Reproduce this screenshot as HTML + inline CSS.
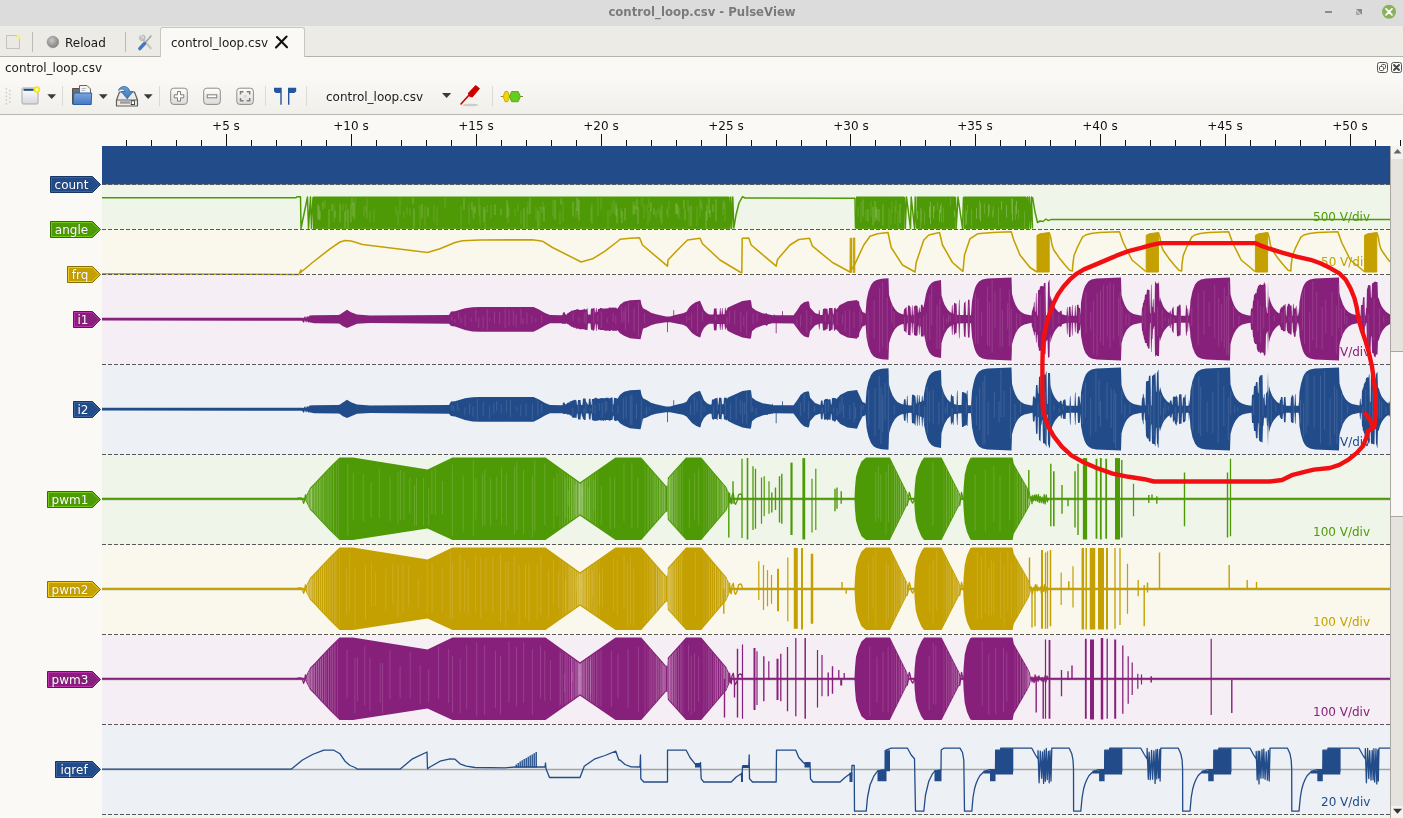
<!DOCTYPE html>
<html><head><meta charset="utf-8"><title>control_loop.csv - PulseView</title>
<style>
html,body{margin:0;padding:0;}
body{width:1404px;height:818px;overflow:hidden;background:#fbf9f6;font-family:"DejaVu Sans","Liberation Sans",sans-serif;font-size:12px;color:#1a1a1a;position:relative;}
.abs{position:absolute;}
#title{left:0;top:0;width:1404px;height:26px;background:#dcdcdc;}
#title .t{will-change:transform;position:absolute;left:0;width:1404px;top:5px;text-align:center;font-weight:bold;font-size:11.7px;color:#7a7a7a;letter-spacing:0px;}
#tabrow{left:0;top:26px;width:1404px;height:30px;background:#edebe6;border-bottom:1px solid #b4b2ad;}
#tab{left:160px;top:27px;width:145px;height:30px;background:#fbf9f6;border:1px solid #c9c6c0;border-bottom:none;border-radius:3px 3px 0 0;box-sizing:border-box;}
.txt{position:absolute;white-space:nowrap;line-height:14px;will-change:transform;}
#toolbar{left:0;top:78px;width:1404px;height:36px;background:linear-gradient(#fbf9f6,#f1efea);border-bottom:1px solid #bab8b3;}
.sep{position:absolute;width:1px;background:#dcdad5;}
.lbl{will-change:transform;position:absolute;color:#fff;font-size:12px;line-height:16px;text-shadow:0 0 1px rgba(0,0,0,.35);white-space:nowrap;}
.tick{will-change:transform;position:absolute;font-size:12px;line-height:14px;white-space:nowrap;color:#111;}
.div{will-change:transform;position:absolute;font-size:12px;line-height:14px;white-space:nowrap;}
svg{position:absolute;left:0;top:0;}
</style></head><body>
<div id="title" class="abs"><div class="t">control_loop.csv - PulseView</div></div>
<div id="tabrow" class="abs"></div>
<div id="tab" class="abs"></div>
<div class="txt" style="left:65px;top:36px;">Reload</div>
<div class="txt" style="left:171px;top:36px;">control_loop.csv</div>
<div class="txt" style="left:5px;top:61px;">control_loop.csv</div>
<div id="toolbar" class="abs"></div>
<div class="txt" style="left:326px;top:90px;">control_loop.csv</div>
<div class="sep" style="left:32px;top:32px;height:20px;background:#bdbbb6;"></div>
<div class="sep" style="left:125px;top:32px;height:20px;background:#bdbbb6;"></div>
<div class="sep" style="left:62px;top:86px;height:20px;"></div>
<div class="sep" style="left:159px;top:86px;height:20px;"></div>
<div class="sep" style="left:265px;top:86px;height:20px;"></div>
<div class="sep" style="left:306px;top:86px;height:20px;"></div>
<div class="sep" style="left:492px;top:86px;height:20px;"></div>
<div class="tick" style="left:226.2px;top:119px;width:60px;margin-left:-30px;text-align:center;">+5 s</div>
<div class="tick" style="left:351.1px;top:119px;width:60px;margin-left:-30px;text-align:center;">+10 s</div>
<div class="tick" style="left:475.9px;top:119px;width:60px;margin-left:-30px;text-align:center;">+15 s</div>
<div class="tick" style="left:600.8px;top:119px;width:60px;margin-left:-30px;text-align:center;">+20 s</div>
<div class="tick" style="left:725.6px;top:119px;width:60px;margin-left:-30px;text-align:center;">+25 s</div>
<div class="tick" style="left:850.5px;top:119px;width:60px;margin-left:-30px;text-align:center;">+30 s</div>
<div class="tick" style="left:975.3px;top:119px;width:60px;margin-left:-30px;text-align:center;">+35 s</div>
<div class="tick" style="left:1100.2px;top:119px;width:60px;margin-left:-30px;text-align:center;">+40 s</div>
<div class="tick" style="left:1225.0px;top:119px;width:60px;margin-left:-30px;text-align:center;">+45 s</div>
<div class="tick" style="left:1349.9px;top:119px;width:60px;margin-left:-30px;text-align:center;">+50 s</div>
<div class="abs" style="left:1390px;top:146px;width:14px;height:672px;background:#e6e3df;border-left:1px solid #a9a7a2;box-sizing:border-box;"></div>
<div class="abs" style="left:1391px;top:146px;width:13px;height:13px;background:#f5f3f0;"></div>
<div class="abs" style="left:1391px;top:806px;width:13px;height:12px;background:#f5f3f0;"></div>
<div class="abs" style="left:1391px;top:351px;width:13px;height:166px;background:#faf8f6;border-top:1px solid #a9a7a2;border-bottom:1px solid #a9a7a2;box-sizing:border-box;"></div>
<div class="abs" style="left:1403px;top:26px;width:1px;height:792px;background:#d3d5cb;"></div>
<svg width="1404" height="818" viewBox="0 0 1404 818">
<rect x="102" y="185" width="1288" height="45" fill="#f0f5ea"/>
<rect x="102" y="230" width="1288" height="45" fill="#faf8ec"/>
<rect x="102" y="275" width="1288" height="90" fill="#f5eef4"/>
<rect x="102" y="365" width="1288" height="90" fill="#edf0f5"/>
<rect x="102" y="455" width="1288" height="90" fill="#f0f5ea"/>
<rect x="102" y="545" width="1288" height="90" fill="#faf8ec"/>
<rect x="102" y="635" width="1288" height="90" fill="#f5eef4"/>
<rect x="102" y="725" width="1288" height="90" fill="#edf0f5"/>
<rect x="102" y="815" width="1288" height="3" fill="#f0f5ea"/>
</svg>
<div class="div" style="right:34px;top:210px;color:#4e9a06;">500 V/div</div>
<div class="div" style="right:34px;top:255px;color:#c4a000;">50 V/div</div>
<div class="div" style="right:34px;top:345px;color:#87207a;">V/div</div>
<div class="div" style="right:34px;top:435px;color:#224b89;">V/div</div>
<div class="div" style="right:34px;top:525px;color:#4e9a06;">100 V/div</div>
<div class="div" style="right:34px;top:615px;color:#c4a000;">100 V/div</div>
<div class="div" style="right:34px;top:705px;color:#87207a;">100 V/div</div>
<div class="div" style="right:34px;top:795px;color:#224b89;">20 V/div</div>
<svg width="1404" height="818" viewBox="0 0 1404 818">
<path d="M126.5 140 V146 M151.5 140 V146 M176.5 140 V146 M201.5 140 V146 M226.5 134 V146 M251.5 140 V146 M276.5 140 V146 M301.5 140 V146 M326.5 140 V146 M351.5 134 V146 M376.5 140 V146 M401.5 140 V146 M426.5 140 V146 M451.5 140 V146 M476.5 134 V146 M501.5 140 V146 M526.5 140 V146 M551.5 140 V146 M576.5 140 V146 M601.5 134 V146 M626.5 140 V146 M651.5 140 V146 M676.5 140 V146 M701.5 140 V146 M726.5 134 V146 M751.5 140 V146 M776.5 140 V146 M801.5 140 V146 M826.5 140 V146 M850.5 134 V146 M875.5 140 V146 M900.5 140 V146 M925.5 140 V146 M950.5 140 V146 M975.5 134 V146 M1000.5 140 V146 M1025.5 140 V146 M1050.5 140 V146 M1075.5 140 V146 M1100.5 134 V146 M1125.5 140 V146 M1150.5 140 V146 M1175.5 140 V146 M1200.5 140 V146 M1225.5 134 V146 M1250.5 140 V146 M1275.5 140 V146 M1300.5 140 V146 M1325.5 140 V146 M1350.5 134 V146 M1375.5 140 V146 M1400.5 140 V146" stroke="#111" stroke-width="1" fill="none"/>
<rect x="102" y="146" width="1288" height="38.5" fill="#224b89"/>
<rect x="313" y="196.5" width="416" height="32.4" fill="#4e9a06"/>
<rect x="856" y="196.5" width="48.5" height="32.4" fill="#4e9a06"/>
<rect x="916.5" y="196.5" width="39" height="32.4" fill="#4e9a06"/>
<rect x="963.5" y="196.5" width="62.5" height="32.4" fill="#4e9a06"/>
<path d="M325 200.2 V207.5 M334 203.7 V222.2 M343 204.4 V211.1 M346 204.1 V221.2 M354 201.2 V219.5 M355 197.9 V219.2 M364 206.2 V216.9 M366 205.8 V212.9 M367 198.8 V218.8 M370 210.8 V223 M374 209.1 V221.9 M396 207 V215.3 M398 210.3 V225.7 M400 197.8 V215.3 M404 211.1 V218 M407 207.3 V214.6 M410 208 V216.4 M420 205.2 V227.1 M425 205.6 V226.6 M434 204.5 V223.1 M437 206.9 V226.2 M445 197.6 V208.4 M461 205.8 V227 M469 203.7 V224.3 M473 208.5 V217.3 M474 205.7 V219.9 M479 197.9 V215.5 M480 205 V225 M485 209.1 V227.8 M487 205.1 V212.5 M491 205.1 V218.3 M508 204.3 V222.8 M509 208.2 V216.1 M515 208.9 V215.7 M518 204.1 V211.5 M521 210.9 V224.4 M527 207.2 V227.9 M528 201.6 V214.6 M536 207.3 V220.3 M540 205.8 V226.3 M542 206.8 V213.3 M543 201.8 V209.6 M553 200.4 V216.4 M560 210.9 V224.1 M563 201.6 V222.2 M576 208.2 V217.7 M578 197.9 V214.9 M591 206.5 V221.4 M592 203 V224.1 M598 197.8 V215.5 M601 197.6 V209.9 M608 210.4 V227.4 M610 209.7 V216.6 M612 202.2 V212.6 M614 199.3 V214.1 M621 208.1 V217.5 M633 201.9 V215.5 M635 201.8 V209.3 M636 206.1 V214.3 M642 198.1 V205.8 M644 203.8 V219 M647 204.9 V211.4 M648 210.8 V225.6 M649 198.6 V207.2 M650 209.9 V220.7 M656 211.2 V218.4 M658 208.2 V214.2 M660 209.7 V218.3 M661 206.6 V222.7 M662 204.4 V224.9 M667 207.7 V215.3 M668 209.5 V218.2 M669 201.4 V209.5 M678 205.5 V216.6 M679 208.4 V219 M688 199.8 V211.6 M689 206.5 V225.9 M697 206.4 V225.8 M700 198.9 V216.9 M701 200.8 V207.6 M702 203.3 V210.6 M723 201.5 V214.7 M724 199.5 V209.1 M725 203.4 V221.7 M858 206.6 V217.4 M861 201.7 V222.2 M866 209.5 V220.9 M871 201 V216.7 M889 208.4 V227.9 M891 210.5 V224.2 M892 201.1 V213.1 M895 205.5 V223.7 M896 198.6 V212.7 M898 210.7 V227.2 M920.5 208 V227.9 M921.5 209.3 V222.6 M924.5 211.3 V224.6 M934.5 205.6 V212.1 M937.5 201.6 V209.5 M941.5 202.7 V222.7 M943.5 207.5 V222.2 M950.5 197.5 V205.9 M965.5 209.1 V225 M967.5 205.2 V212.9 M971.5 209.1 V226.4 M979.5 200.6 V218.9 M984.5 203.4 V213.8 M989.5 204.7 V213.2 M992.5 209.9 V217.6 M993.5 206.2 V216.4 M998.5 207.3 V225.4 M1011.5 198.5 V213.9 M1015.5 204.9 V219.8 M1018.5 209.1 V218.8 M1024.5 211.2 V227.9" stroke="#f0f5ea" stroke-width=".8" opacity=".2" fill="none"/>
<path d="M318 204.2 V219.1 M319 206.3 V220.3 M320 210.9 V219.7 M323 202 V209.4 M329 209.3 V227.9 M332 204 V211.2 M335 210.6 V217.5 M340 204.1 V221.9 M345 211.3 V227.9 M348 209.3 V227.9 M351 204.2 V222.4 M352 197.6 V205 M353 203 V216.6 M413 197.6 V204.1 M414 208.5 V227.4 M422 204.2 V218.9 M428 207.2 V216.6 M464 198.6 V209.9 M472 202.5 V210 M475 206.4 V213 M484 206.8 V222 M495 204.5 V215 M501 208.7 V215.4 M507 200.4 V218.3 M524 208.2 V227.9 M530 197.6 V214.1 M538 210.4 V227.9 M544 207 V221.5 M555 199.6 V219.6 M561 198.4 V204.4 M573 201.8 V216.3 M577 197.9 V210.7 M579 200.3 V220.5 M616 203.4 V216.1 M617 208.6 V223.4 M622 210.8 V223.2 M625 208.3 V220.5 M634 205.5 V214.2 M637 199.1 V209.1 M638 207.3 V223.8 M651 202.7 V211.5 M654 208.3 V214.8 M676 202.8 V213.7 M677 204.1 V213.8 M684 199.8 V208.7 M685 208.9 V220.2 M691 205.6 V226.4 M706 211 V227.9 M707 204.8 V220.5 M709 197.8 V213.3 M710 210 V217.3 M713 204.5 V212.2 M716 199.2 V221.1 M863 199.4 V216.6 M868 209.1 V221.5 M873 206.9 V225.6 M875 201 V221.6 M876 206.8 V217.5 M877 209.2 V219.9 M879 209 V221.4 M883 204.6 V225.8 M900 203.7 V223 M917.5 211 V219 M929.5 206.6 V217.7 M930.5 202 V223.9 M933.5 205.8 V218.8 M939.5 209.3 V221.3 M940.5 205.2 V213.2 M954.5 210.3 V216.8 M966.5 211.2 V224.5 M976.5 208.3 V218.7 M980.5 202.9 V221.4 M988.5 204.8 V216.6 M1001.5 201 V209.9 M1006.5 205.3 V217.5 M1012.5 198.8 V220.7 M1016.5 201.1 V213.8" stroke="#f0f5ea" stroke-width=".8" opacity=".34" fill="none"/>
<path d="M102 197.7 L296 197.7 L297 196.7 L300.5 196.7 L301 228.5 L307.5 197 L308.5 228.5 L310.5 197 L311.5 228.5 L313 197 M729 197 L729.8 228.4 L730.8 197 L731.6 228.4 L732.8 197 L733.8 228.4 M733.8 228.5 L736 215 L739 203 L742.5 196.7 L745 198 L855 198.3 L855.5 228.5 M904.5 197 L905.3 228.4 L906.5 197 L910.5 228.4 L911.2 197 L914.5 228.4 L915.2 197 L916.5 228.4 M955.5 197 L956.2 228.4 L958 197 L962.5 228.4 L963.5 197 M1026 197 L1026.8 228.4 L1027.6 197 L1028.4 228.4 L1029.4 197 L1030.4 228.4 L1031.5 197 L1032.5 228.4 M1032.5 197 L1035 212 L1037.5 222.5 L1040 221 L1043 221.5 L1046 219 L1048 220.5 L1051 219.6 L1390 219.6" stroke="#4e9a06" stroke-width="1.5" fill="none" stroke-linejoin="round"/>
<path d="M102 273.8 L298.8 274.5 L301 270 L300 273 L312.5 262.5 L330 248.8 L340 242 L345 240.5 L351.2 241 L362.5 244.5 L427.5 252.5 L440 248.8 L455 242.5 L462.5 240.8 L480 240 L532.5 239.8 L542.5 241.2 L552.5 247.5 L581.2 262 L592.5 258.8 L605 251.2 L618.8 240.5 L620 239.2 L630 238.2 L639.5 237.8 L642.5 245 L667.5 266.2 L668 260 L677.5 250 L687.5 240 L700 238.2 L702.5 243.8 L720 260 L740 272 L741.8 272.8 L742.2 238.2 L748.8 238 L751.2 245 L776.2 266.2 L777.5 259.5 L790 245 L798.8 239.5 L809.5 238.2 L812.5 246.2 L832.5 262.5 L850 272 L855 263.8 L863.8 245 L870 236.2 L877.5 233.8 L888 232.5 L891.2 247.5 L902.5 265 L915 272 L916.2 262.5 L923.8 240 L928.8 235 L939.5 232.5 L942.5 245 L952.5 262.5 L962.5 271.2 L963 271.2 L964.5 255 L970 238.8 L977.5 233.8 L992.5 232.5 L1011.2 231.8 L1013.8 240 L1020 255 L1030 267.5 L1037 272" stroke="#c4a000" stroke-width="1.55" fill="none" stroke-linejoin="round"/>
<path d="M850 272.5 L850.2 238.2 L851.5 238.2 L851.5 272.5Z" fill="#c4a000" stroke="#c4a000" stroke-width="1"/>
<path d="M853.2 272.5 L853.2 238 L854.8 238 L854.8 272.5Z" fill="#c4a000" stroke="#c4a000" stroke-width="1"/>
<path d="M1037 272 L1037 235.3 L1040 233.8 L1049.2 232.5 L1049.2 272Z" fill="#c4a000" stroke="#c4a000" stroke-width="1"/>
<path d="M1049.2 232.6 L1050.7 237.2 L1052 245.1 L1053.8 250 L1059.3 257.9 L1064.8 264.7 L1069.7 270.2 L1072.4 271 L1072.8 264.7 L1074 255.5 L1077 248.2 L1080 242 L1082.5 237.2 L1085.5 235 L1091 233.5 L1099.5 232.5 L1119.5 231.8 L1123.2 242.5 L1132 260 L1145.8 271.5" stroke="#c4a000" stroke-width="1.55" fill="none" stroke-linejoin="round"/>
<path d="M1146.2 272 L1146.2 235.3 L1149.2 233.8 L1158.4 232.5 L1158.4 272Z" fill="#c4a000" stroke="#c4a000" stroke-width="1"/>
<path d="M1158.4 232.6 L1159.9 237.2 L1161.2 245.1 L1163 250 L1168.5 257.9 L1174 264.7 L1178.9 270.2 L1181.6 271 L1182 264.7 L1183.2 255.5 L1186.2 248.2 L1189.2 242 L1191.7 237.2 L1194.7 235 L1200.2 233.5 L1208.7 232.5 L1228.7 231.8 L1232.5 242.5 L1241.2 260 L1255 271.5" stroke="#c4a000" stroke-width="1.55" fill="none" stroke-linejoin="round"/>
<path d="M1255.4 272 L1255.4 235.3 L1258.4 233.8 L1267.6 232.5 L1267.6 272Z" fill="#c4a000" stroke="#c4a000" stroke-width="1"/>
<path d="M1267.6 232.6 L1269.1 237.2 L1270.4 245.1 L1272.2 250 L1277.7 257.9 L1283.2 264.7 L1288.1 270.2 L1290.8 271 L1291.2 264.7 L1292.4 255.5 L1295.4 248.2 L1298.4 242 L1300.9 237.2 L1303.9 235 L1309.4 233.5 L1317.9 232.5 L1337.9 231.8 L1341.7 242.5 L1350.4 260 L1364.2 271.5" stroke="#c4a000" stroke-width="1.55" fill="none" stroke-linejoin="round"/>
<path d="M1364.6 272 L1364.6 235.3 L1367.6 233.8 L1376.8 232.5 L1376.8 272Z" fill="#c4a000" stroke="#c4a000" stroke-width="1"/>
<path d="M1376.8 232.6 L1378.3 237.2 L1379.6 245.1 L1381.4 250 L1386.9 257.9 L1390 261.7" stroke="#c4a000" stroke-width="1.55" fill="none" stroke-linejoin="round"/>
<path d="M102 317.8 L302 317.7 L303.5 318.1 L305 316.2 L306 318.2 L307 315.7 L308 316.9 L308.5 316.8 L309.5 315.5 L314 315.2 L338 315 L339.5 314.7 L347 309.8 L351 312.2 L357 314.6 L370 315.4 L449 314.9 L451 311.4 L455 311.2 L465 308.2 L472.5 307.2 L480 306.9 L533.5 306.9 L538.5 309.3 L545 312.9 L550 314.9 L561.5 315.2 L562.5 314.9 L563 312.4 L563.5 312.4 L564 311.9 L564.5 311.9 L565 313.8 L565.5 313.8 L566 315.1 L566.5 315.1 L567 313.4 L567.5 313.4 L568 312.9 L568.5 312.9 L569 312.2 L570.5 311.7 L571 310.8 L573.5 310.6 L574 309.9 L575.5 309.9 L576 309.4 L577 309.3 L578.5 309.3 L579 310 L582.5 309.8 L583.5 309.6 L584 308.7 L584.5 308.7 L585 309.4 L586.5 309.4 L587 308.2 L587.5 308.2 L588 314.8 L588.5 314.8 L589 314.2 L590.5 314.8 L591 308.8 L592 308.4 L593.5 308.5 L594 307.9 L594.5 307.9 L595 312.6 L595.5 312.6 L596 308.1 L596.5 308.1 L597 312.1 L597.5 312.1 L598 308.9 L599.5 308.9 L600 308 L601.5 308 L602 308.5 L605.5 308.5 L608.5 308.2 L609 307.6 L610.5 307.6 L611 307.9 L612 307.4 L615.5 307.7 L616 307.2 L616.5 308.2 L617.5 308.7 L620 304.7 L624 301.8 L630 300.2 L640 299.8 L640.5 299.8 L641.5 304.7 L643 308.2 L647 310.2 L651 312.7 L656 314.2 L666 316.5 L670 316.4 L676 314.7 L683 313.2 L686.5 311.8 L689 307.4 L691.5 304.9 L695.5 302.3 L700 300.8 L704 310.3 L707 313.3 L709.5 314.6 L713.5 314.6 L714 308.6 L715.5 308.6 L716.5 308.2 L717 314.5 L719.5 314.4 L720 307.9 L720.5 307.9 L721 314.3 L721.5 314.3 L722 308 L722.5 308 L723 314.3 L724.5 314.2 L725 307.6 L725.5 307.6 L726 311.3 L727.5 307.9 L728 307.5 L735 304.2 L742.5 300.9 L750 299.9 L751 300.4 L752 307.4 L756 310.5 L762.5 313.2 L765.5 313.8 L766 313.1 L766.5 313.1 L767 314.1 L772.5 315.2 L773.5 315.2 L774 314.4 L774.5 314.4 L775 315.2 L793.5 315.2 L797 310.4 L800.5 304.9 L804 302.2 L808 301.2 L809 301.7 L810 307.4 L815 312.9 L818.5 314.3 L819 309.9 L819.5 309.9 L820 314.9 L822.5 314.9 L823 309.1 L823.5 309.1 L824 308.5 L825.5 308.5 L826 308.8 L827.5 308.8 L828 314.7 L828.5 314.6 L829 308 L832.5 308.1 L833 314.5 L833.5 314.5 L834 308.3 L834.5 308.3 L835 307.7 L835.5 307.7 L836 309.5 L836.5 309.4 L837 308.4 L837.5 308.2 L838.5 306.9 L839 305.8 L840 304.9 L847.5 301.2 L857 299.9 L858 301.5 L858.5 301.5 L859 300.5 L859.5 304.9 L862.5 311.9 L865 312.9 L865.5 314.2 L866.5 300.9 L867 298 L868.5 291.3 L871 285 L873.5 281.8 L876.5 280 L881.5 278.8 L888.5 278.2 L889 294.6 L890.5 300.1 L892.5 305.2 L895 309.3 L897.5 311.9 L901 313.8 L903.5 314.5 L904 309.3 L904.5 309.3 L905 308.2 L905.5 308.2 L906 307 L906.5 307 L907 315.2 L907.5 315.2 L908 305.5 L909.5 305.5 L910 306.8 L910.5 306.8 L911 315.6 L911.5 315.6 L912 305.5 L912.5 305.5 L913 315.2 L913.5 314.9 L914 306.4 L914.5 306.4 L915 305.5 L916.5 305.5 L917 306 L917.5 306 L918 312.8 L918.5 312.6 L919 307.5 L919.5 307.5 L920 312 L920.5 311.9 L921 304.8 L922.5 304.8 L923 307.3 L923.5 307.3 L926 293.9 L927.5 289.2 L929 286.1 L931.5 283.1 L934.5 281.3 L941 279.9 L941.5 295.2 L943 300.5 L944.5 304.4 L947.5 309.6 L950 312 L951.5 312.9 L952 305.1 L952.5 305.1 L953 313.6 L953.5 313.9 L954 302.8 L954.5 302.8 L955 303.4 L956.5 303.4 L957 314.8 L958.5 315 L959 299.8 L959.5 299.8 L960 315 L963.5 315.1 L964 302.9 L964.5 302.9 L965 301.5 L965.5 301.5 L966 315.1 L967.5 315.1 L968 299.7 L969.5 299.7 L970 315.2 L971 315.2 L972 301.3 L973.5 293.4 L975 288.1 L976.5 284.7 L979 281.4 L982.5 279.4 L987.5 278.4 L1011.5 277.5 L1012 293.8 L1013.5 299.4 L1015.5 304.8 L1018 309.1 L1021 312.1 L1024.5 314 L1031.5 315.6 L1032 310.4 L1032.5 310.4 L1033 307.3 L1033.5 307.3 L1034 301.9 L1034.5 301.9 L1035 311.7 L1035.5 311.7 L1036 293 L1036.5 293 L1037 315.6 L1037.5 315.6 L1038 290.2 L1039.5 289.7 L1040 286.6 L1040.5 286.6 L1041 286 L1042.5 286 L1043 286.5 L1043.5 286.5 L1044 283.1 L1045.5 283.1 L1046 315.3 L1047.5 315.3 L1048 282.3 L1048.5 282.3 L1049 280.1 L1049.5 280.1 L1050 299.9 L1050.5 295.2 L1051.5 299.8 L1052.5 302.7 L1054 306 L1055.5 308.4 L1058 311.4 L1059.5 312.5 L1060 311.2 L1061.5 310.6 L1062 314.2 L1066.5 315.5 L1067 307.1 L1067.5 307.1 L1068 315.7 L1068.5 315.7 L1069 306.7 L1070.5 306.7 L1071 315.7 L1071.5 315.7 L1072 305.1 L1072.5 305.1 L1073 315.7 L1074.5 315.7 L1075 305.4 L1075.5 305.4 L1076 315.7 L1076.5 315.7 L1077 304.7 L1078.5 304.7 L1079 307.9 L1080 307.9 L1080.5 315.2 L1081 302.6 L1082.5 294.2 L1084 288.7 L1085.5 285.2 L1088.5 281.2 L1091.5 279.5 L1096.5 278.4 L1120.5 277.5 L1121 277.5 L1121.5 295 L1123 300.4 L1125 305.4 L1127 308.9 L1130 312 L1133.5 313.9 L1141.5 315.7 L1142 307.5 L1142.5 307.5 L1143 303 L1143.5 303 L1144 299.9 L1144.5 299.9 L1145 294.5 L1146.5 294.5 L1147 289.6 L1149.5 289.9 L1150 313.3 L1150.5 313.3 L1151 284.8 L1151.5 284.8 L1152 306.9 L1152.5 306.9 L1153 299 L1153.5 299 L1154 312.4 L1154.5 312.4 L1155 281.6 L1155.5 281.6 L1156 283.3 L1158.5 283.5 L1159 280.5 L1159.5 301.9 L1160 296.7 L1160.5 299.2 L1163 305.7 L1164.5 308.2 L1167.5 311.7 L1169.5 313.1 L1170 310.8 L1170.5 310.8 L1171 314.1 L1171.5 314.4 L1172 308.8 L1172.5 308.8 L1173 306.8 L1173.5 306.8 L1174 315.1 L1176.5 315.7 L1177 306.5 L1178.5 306.5 L1179 304.8 L1180.5 304.8 L1181 315.7 L1185.5 315.7 L1186 305 L1186.5 305 L1187 308.4 L1187.5 308.4 L1188 315.7 L1188.5 315.7 L1189 307.3 L1189.5 315.4 L1190.5 300.6 L1192.5 290.9 L1195 284.5 L1197.5 281.4 L1201 279.4 L1206 278.4 L1230 277.5 L1230.5 294.2 L1232 299.8 L1234 305 L1236 308.5 L1239 311.8 L1242.5 313.8 L1246.5 314.9 L1250.5 315.7 L1251 308.5 L1252.5 308.5 L1253 300.7 L1253.5 300.7 L1254 295 L1254.5 295 L1255 293.3 L1256.5 293.3 L1257 288.8 L1257.5 288.8 L1258 285.9 L1258.5 285.9 L1259 284.9 L1259.5 284.9 L1260 284.2 L1260.5 284.2 L1261 285 L1263.5 284.8 L1264 282.2 L1264.5 282.2 L1265 284.2 L1265.5 284.2 L1266 307.2 L1266.5 307.2 L1267 312.9 L1267.5 312.9 L1268 280.8 L1268.5 308.5 L1269 295.7 L1270 300.1 L1272 305.2 L1274 308.5 L1277 311.9 L1279.5 313.6 L1280 309.3 L1280.5 309.3 L1281 307.3 L1282.5 307.3 L1283 305.5 L1284.5 305.5 L1285 304.1 L1285.5 304.1 L1286 315.7 L1286.5 315.7 L1287 306.5 L1287.5 306.5 L1288 303.8 L1289.5 303.8 L1290 305.4 L1291.5 305.4 L1292 315.7 L1292.5 315.7 L1293 303.8 L1293.5 303.8 L1294 308.5 L1295.5 308.5 L1296 306.1 L1296.5 306.1 L1297 315.7 L1297.5 315.7 L1298 307.1 L1298.5 315.7 L1299 312.2 L1299.5 301.9 L1301 293.8 L1303 287.1 L1304.5 284.1 L1306.5 281.5 L1310 279.4 L1315 278.4 L1339 277.5 L1339.5 293.3 L1340.5 297.3 L1343 304.6 L1345.5 309 L1348.5 312 L1352 313.9 L1356 315 L1360.5 315.7 L1361 304.9 L1362.5 304.9 L1363 297.3 L1364.5 297.3 L1365 315.6 L1365.5 315.5 L1366 308 L1366.5 308 L1367 288.6 L1367.5 288.6 L1368 285.2 L1369.5 285 L1370 285.5 L1370.5 285.5 L1371 297.7 L1371.5 297.7 L1372 283.5 L1373.5 282.8 L1374 281.9 L1375.5 281.5 L1376 282 L1377.5 282 L1378 298.5 L1378.5 297.2 L1380 302.4 L1381.5 305.9 L1383 308.3 L1386 311.8 L1390 314.4 L1390 324 L1386 326.6 L1383 330.1 L1381.5 332.5 L1380 336 L1378.5 341.2 L1378 339.9 L1377.5 354.6 L1376 354.6 L1375.5 357.2 L1375 357.2 L1374.5 356.5 L1374 356.5 L1373.5 353.4 L1373 353.4 L1372.5 352.7 L1372 352.7 L1371.5 336.5 L1371 336.5 L1370.5 351.3 L1370 351.3 L1369.5 353.3 L1369 353.3 L1368.5 351.1 L1368 351.1 L1367.5 349.1 L1367 349.1 L1366.5 322.9 L1366 322.9 L1365.5 326.2 L1365 326.2 L1364.5 340.4 L1363 340.4 L1362.5 332.5 L1361 332.5 L1360.5 325.1 L1360 325.1 L1359.5 322.8 L1352 324.5 L1348.5 326.4 L1345.5 329.4 L1343 333.8 L1340.5 341.1 L1339.5 345.1 L1339 360.5 L1315 359.6 L1310 358.6 L1306.5 356.5 L1304.5 353.9 L1303 350.9 L1301 344.3 L1299.5 336.3 L1299 326.1 L1298.5 322.7 L1298 329.8 L1297.5 322.7 L1297 322.7 L1296.5 331.2 L1296 331.2 L1295.5 336.7 L1294 336.7 L1293.5 332.6 L1293 332.6 L1292.5 322.7 L1292 322.7 L1291.5 334.4 L1290 334.4 L1289.5 333.2 L1288 333.2 L1287.5 331.1 L1287 331.1 L1286.5 322.7 L1286 322.7 L1285.5 331.2 L1283 331.3 L1282.5 330.1 L1281 330.1 L1280.5 327 L1280 327 L1279.5 324.8 L1276.5 326.9 L1274 329.9 L1272.5 332.2 L1270 338.3 L1269 342.7 L1268.5 329.9 L1268 354.2 L1267.5 331.7 L1267 331.7 L1266.5 333.9 L1266 333.9 L1265.5 354.7 L1265 354.7 L1264.5 355.8 L1264 355.8 L1263.5 352.8 L1262.5 352.4 L1261 352.4 L1260.5 353.4 L1260 353.4 L1259.5 351.4 L1258 352 L1257.5 349.8 L1257 349.8 L1256.5 344.1 L1255 344.1 L1254.5 342.4 L1254 342.4 L1253.5 337.3 L1253 337.3 L1252.5 329.8 L1251 329.8 L1250.5 322.7 L1246.5 323.5 L1242.5 324.6 L1239 326.6 L1236 329.9 L1234 333.4 L1232 338.6 L1230.5 344.2 L1230 360.5 L1206 359.6 L1201 358.6 L1197.5 356.7 L1195 353.5 L1192.5 347.2 L1190.5 337.6 L1189.5 322.9 L1189 332.3 L1188.5 322.7 L1188 322.7 L1187.5 331.8 L1187 331.8 L1186.5 335.7 L1186 335.7 L1185.5 322.7 L1181 322.7 L1180.5 335.6 L1179 335.6 L1178.5 336.3 L1177 336.3 L1176.5 322.7 L1174 323.3 L1173.5 332.9 L1173 332.9 L1172.5 331.2 L1172 331.2 L1171.5 324 L1171 324.3 L1170.5 327.9 L1170 327.9 L1169.5 325.3 L1167.5 326.7 L1164.5 330.2 L1163 332.7 L1160.5 339.2 L1160 341.7 L1159.5 336.5 L1159 356.4 L1158.5 356 L1157 356 L1156.5 354.9 L1156 354.9 L1155.5 356.5 L1155 356.5 L1154.5 326.3 L1154 326.3 L1153.5 328.9 L1153 328.9 L1152.5 339 L1152 339 L1151.5 352 L1151 352 L1150.5 323 L1150 322.9 L1149.5 348.6 L1148 348.6 L1147.5 346.1 L1147 346.1 L1146.5 343 L1145 343 L1144.5 339.5 L1144 339.5 L1143.5 335.2 L1143 335.2 L1142.5 331 L1142 331 L1141.5 322.7 L1133.5 324.5 L1130 326.4 L1127 329.5 L1125 333 L1123 338 L1121.5 343.4 L1121 360.5 L1120.5 360.5 L1096.5 359.6 L1091.5 358.5 L1088.5 356.8 L1085.5 352.9 L1084 349.4 L1082.5 343.9 L1081 335.7 L1080.5 323.2 L1080 330.2 L1079 330.2 L1078.5 333.5 L1077 333.5 L1076.5 322.7 L1076 322.7 L1075.5 332.2 L1075 332.2 L1074.5 322.7 L1073 322.7 L1072.5 335.6 L1072 335.6 L1071.5 322.7 L1071 322.7 L1070.5 336.9 L1069 336.9 L1068.5 322.7 L1068 322.7 L1067.5 334.2 L1067 334.2 L1066.5 322.9 L1062 324.2 L1061.5 326.6 L1060 326.7 L1059.5 325.9 L1058 327 L1055.5 330 L1054 332.4 L1052.5 335.7 L1051.5 338.6 L1050.5 343.2 L1050 333.3 L1049.5 357 L1049 357 L1048.5 357.7 L1048 357.7 L1047.5 339.9 L1047 339.9 L1046.5 341.6 L1046 341.6 L1045.5 353.9 L1044 353.9 L1043.5 352.6 L1043 352.6 L1042.5 351.1 L1041 351.1 L1040.5 350.5 L1039 351 L1038.5 346.7 L1038 346.7 L1037.5 334.8 L1037 334.8 L1036.5 342.8 L1036 342.8 L1035.5 332 L1035 332 L1034.5 335.4 L1034 335.4 L1033.5 330.9 L1033 330.9 L1032.5 327.5 L1032 327.5 L1031.5 322.8 L1024.5 324.4 L1021 326.3 L1018 329.3 L1015.5 333.6 L1013.5 339 L1012 344.6 L1011.5 360.5 L987.5 359.6 L982.5 358.6 L979 356.6 L976.5 353.3 L975 350 L973.5 344.7 L972 337 L971 323.2 L970 323.2 L969.5 337.4 L968 337.4 L967.5 323.2 L966 323.2 L965.5 337.3 L965 337.3 L964.5 336.5 L964 336.5 L963.5 323.3 L960 323.4 L959.5 338.2 L959 338.2 L958.5 323.4 L957 323.6 L956.5 333.3 L955 333.3 L954.5 334.8 L954 334.8 L953.5 324.5 L953 324.8 L952.5 334.9 L952 334.9 L951.5 325.5 L950 326.4 L947.5 328.8 L944.5 334 L943 337.9 L941.5 343.2 L941 358.1 L934.5 356.8 L931.5 355 L929 352 L926.5 346.1 L924 334.2 L923.5 336.5 L921 336.5 L920.5 326.5 L920 326.4 L919.5 334.7 L919 334.7 L918.5 325.8 L918 325.6 L917.5 335.4 L917 335.4 L916.5 335.8 L915 335.8 L914.5 334.9 L914 334.9 L913.5 323.4 L913 323.2 L912.5 333.2 L912 333.2 L911.5 322.8 L911 322.8 L910.5 335.5 L910 335.5 L909.5 335 L908 335 L907.5 323.2 L907 323.2 L906.5 332.8 L906 332.8 L905.5 331.6 L905 331.6 L904.5 330.9 L904 330.9 L903.5 323.9 L901 324.6 L897.5 326.5 L895 329.1 L892.5 333.2 L890.5 338.3 L889 343.8 L888.5 359.8 L881.5 359.2 L876.5 358 L873.5 356.2 L871 353.1 L868.5 346.8 L867 340.2 L866.5 337.3 L865.5 324.2 L865 325.5 L862.5 326.4 L859.5 332.4 L859 336.6 L858.5 337.2 L857.5 337.4 L857 338.7 L847.5 337.4 L840 333.7 L837.5 330.5 L837 330.4 L836.5 329.4 L835 329.5 L834.5 331 L834 331 L833.5 324.2 L833 324.2 L832.5 329.8 L831 329.8 L830.5 331 L829 331 L828.5 323.9 L828 323.9 L827.5 329.2 L826 329.2 L825.5 330.2 L823 330.4 L822.5 323.6 L820 323.4 L819.5 329.6 L819 329.6 L818.5 324.1 L815 325.4 L810 331.2 L809 336.9 L808 337.4 L804 336.2 L800.5 332.9 L793.5 323.4 L772.5 323.2 L768 324.2 L767.5 325.3 L766.5 325.7 L766 325.7 L765.5 324.8 L762.5 325.4 L756 328.1 L752 331.2 L751 337.9 L750 338.7 L742.5 337.4 L735 334.4 L728 330.9 L727.5 330.5 L726 327.1 L725.5 329.7 L725 329.7 L724.5 324.2 L723 324.1 L722.5 330.1 L722 330.1 L721.5 324.1 L721 324.1 L720.5 330.1 L720 330.1 L719.5 324 L717 323.9 L716.5 330.4 L714 330.2 L713.5 323.8 L709.5 323.8 L707 325.1 L704 328.1 L701.5 332.8 L700.5 336.7 L700 337.6 L696 335.8 L692 332.9 L686.5 326.6 L683 324.7 L670 322.2 L666 322.2 L656 323.7 L651 325.2 L647 327.2 L643 328.7 L640.5 339.2 L640 339.2 L630 338.2 L624 335.7 L620 333.2 L617.5 330.2 L616.5 330.7 L612 330.8 L611.5 330.1 L611 330.1 L610.5 331.1 L609 331.1 L608.5 330.6 L607.5 330.4 L606 331 L605.5 330.5 L604 330.5 L603.5 330 L600 330.1 L599.5 329.6 L598 329.6 L597.5 324.2 L597 324.2 L596.5 330.9 L596 330.9 L595.5 323.7 L595 323.7 L594.5 329.8 L594 329.8 L593.5 330.9 L593 330.9 L592.5 329.8 L591 329.8 L590.5 323.6 L588 323.6 L587.5 330.3 L587 330.3 L586.5 329.7 L585 330.1 L584.5 329.3 L579 329.2 L578.5 328.6 L576 328.8 L575.5 327.8 L574 327.8 L573 327.4 L572.5 326.8 L571 326.8 L570.5 325.8 L569 325.3 L568.5 324.2 L567 323.9 L566.5 323.3 L566 323.3 L565.5 324 L565 324 L564.5 323.7 L562 323.7 L561.5 323.2 L550 323.2 L545 325.4 L538.5 329.3 L533.5 331.7 L480 331.7 L472.5 331.4 L465 329.9 L455 326.4 L451 325.9 L449 323.7 L370 323 L357 323.8 L347 328 L343 326.2 L339.5 323.7 L338 323.4 L314 323.2 L309.5 322.2 L308.5 322.6 L308 322.3 L307 320.9 L306 322.7 L305 320.2 L304 322.6 L303.5 322.8 L302 320.7 L102 320.6Z" fill="#87207a"/>
<path d="M451.8 316.5 V320.7 M454.9 318.7 V322.8 M458.7 312.5 V319.6 M460.9 318 V322.9 M465.2 314.6 V326.2 M471.3 318.3 V321.8 M475.8 309.8 V321.9 M478.7 317.3 V327.8 M483.1 316.6 V328.3 M487.3 309.2 V329.9 M489.7 318.1 V320.8 M494.5 311.5 V323.5 M499.7 312.2 V324.3 M505.2 308.6 V328.2 M509.1 309.9 V326.3 M513.4 310.2 V325 M516.2 314 V326.9 M520.9 308.8 V323.5 M523.1 317.9 V324.2 M527 312.5 V324 M531.9 315.9 V322.7 M535.9 318.4 V321.5 M541.6 315.2 V323.2 M573 312.4 V321.1 M579 316.9 V322.9 M584.3 312.7 V323 M586.2 311.9 V324.5 M593.7 310.5 V322.9 M597.8 315 V321.5 M601.3 311.6 V328 M607.3 318.2 V322.9 M613.2 312.9 V321.8 M615.8 316.1 V324 M621.8 306.3 V323.2 M623.9 311 V321.6 M625.4 306.5 V330.6 M628.5 303 V322.9 M634.1 307.6 V331.6 M638.5 302.1 V337.1 M644.5 313 V323.1 M686.7 315.4 V322.3 M689.1 317.2 V319.8 M691.6 313.6 V328.9 M697.5 303.9 V333.4 M702.6 311.7 V321 M715.7 316 V320.5 M727 316.8 V325.3 M729.4 310.8 V323.4 M734.8 310.3 V324.8 M740.8 311.5 V332 M743.8 315.9 V326.3 M746.6 311.5 V335.3 M753.1 313.6 V324.2 M757.2 312.8 V322.1 M796.8 319 V325.5 M800.6 315 V327.2 M806.8 310.1 V332.9 M811.1 315.5 V325.4 M825.3 314.3 V321.3 M830.3 314.2 V320.5 M832.6 316.5 V326.9 M837.2 311.9 V324.9 M842.5 315 V323.5 M845.2 310.5 V331.7 M849.6 309.7 V335.7 M854.1 312.6 V328.1 M860 308.5 V329.3 M861.6 314.9 V323.7 M868.1 311.4 V341.8 M874.1 300.2 V338.8 M879.6 288.3 V352.6 M882.6 281.5 V347.7 M887.2 297 V349.6 M891.7 305.4 V323.3 M894 311.6 V327.6 M904.7 317 V328.8 M908.2 311 V330.8 M914.6 308.4 V327.3 M919.9 318.2 V331.4 M923.6 315.9 V334.4 M926.3 313.4 V339.9 M929.8 295 V339.8 M931.7 285.6 V325 M937 304.8 V348.8 M939.8 298.8 V348.9 M943.6 316.3 V330 M946.8 318.3 V323.4 M948.5 314.5 V322.1 M950.3 315.5 V320.9 M956.1 312.4 V321.8 M959.9 307.4 V323.9 M968.7 304.6 V330.8 M975.4 293.7 V343.5 M977.9 298.3 V344.4 M981.7 312.6 V335.5 M987.5 286.6 V345.7 M989.4 302.4 V346.4 M992.2 280.2 V352.5 M995 292.4 V328.4 M1000.1 288.2 V346.8 M1002.4 310.3 V346.9 M1007.7 303.2 V329 M1009.3 289.8 V346.2 M1011.2 308.4 V348.2 M1016.6 313.3 V329.7 M1020.1 314.2 V325.4 M1035.1 316.4 V329.1 M1040.2 294.9 V330.8 M1045 288.9 V346.8 M1053 309.5 V329.1 M1058.8 314.7 V323.3 M1067.9 314.7 V325.9 M1079.8 312.1 V322.8 M1085.9 292.6 V332.8 M1090.8 311.5 V329.5 M1093.4 300.9 V354.5 M1097.1 292.7 V356.2 M1100.5 290.5 V342.2 M1103.4 284.7 V345.4 M1107.3 284.9 V336.8 M1110 282.4 V347.5 M1113.6 284.2 V339.6 M1118.6 297.5 V335.8 M1120.2 292.1 V346.9 M1122 305.6 V339 M1126 313.8 V325.8 M1129.1 314.2 V325.8 M1142.6 311.5 V323.2 M1145.1 305.3 V329.8 M1151.3 296.3 V335.4 M1157.6 307 V336 M1162.2 310.1 V328.3 M1165 317.2 V320.8 M1168.5 318.7 V324.6 M1170.6 315.7 V324.3 M1173.9 318 V329.8 M1179 314.2 V331 M1180.5 312.6 V328.9 M1187.2 315.5 V324.8 M1191.8 307.4 V325.7 M1198.2 292.7 V345 M1204.1 290.4 V334.8 M1209.1 302.2 V327 M1214.7 284.7 V338.2 M1218.7 298 V346.6 M1221.6 304.1 V341.2 M1224.3 287.4 V348.1 M1226.7 296.2 V354.7 M1228.5 281.3 V355.6 M1233.5 306.7 V327.5 M1238.9 315.8 V324.6 M1252.3 312.2 V324 M1257.8 299.8 V330.8 M1260.6 305.7 V342.9 M1263.7 307.2 V328.6 M1269.4 307.9 V333.3 M1274.4 315.4 V321.3 M1282 312.4 V322.8 M1284.7 309 V329.6 M1289.1 316.9 V320.8 M1291.3 314.5 V327.8 M1295.9 313.4 V322.1 M1302.4 292.6 V330.1 M1304.5 287.6 V343.9 M1309.6 312.6 V353.1 M1312.8 281.3 V340.3 M1316.7 292 V348.2 M1322.2 307.1 V349.2 M1325.7 299.8 V333.6 M1332.1 292.1 V336 M1336.3 305.7 V354.1 M1338.7 282.6 V328.1 M1341.4 308.4 V335.9 M1344.5 309 V324.2 M1346.8 316.1 V324.8 M1361.2 307.1 V321.5 M1364.2 300.2 V335.8 M1368.2 313.8 V344.4 M1374 298.4 V340.6 M1379.5 308.3 V335.1 M1383.8 315.8 V322.9 M1386.7 318.9 V319.9" stroke="#f5eef4" stroke-width=".7" opacity=".2" fill="none"/>
<path d="M667.5 319.2 V332.2 M673.7 310.2 V319.2 M776.2 319.2 V333.2 M782.5 311.2 V319.2" stroke="#87207a" stroke-width="1" fill="none" opacity=".8"/>
<path d="M102 407.8 L302 407.7 L303.5 408.1 L305 406.2 L306 408.2 L307 405.7 L308 406.9 L308.5 406.8 L309.5 405.5 L314 405.2 L338 405 L339.5 404.7 L347 399.8 L351 402.2 L357 404.6 L370 405.4 L449 404.9 L451 401.4 L455 401.2 L465 398.2 L472.5 397.2 L480 396.9 L533.5 396.9 L538.5 399.3 L545 402.9 L550 404.9 L562.5 405.2 L563 402.4 L564.5 402.4 L565 404.3 L566.5 404.3 L567 403.1 L567.5 403.1 L568 402.4 L569.5 402.4 L570 401.3 L571.5 401.3 L572 400.7 L575 399.7 L575.5 399.7 L576 400.5 L576.5 400.5 L577 405 L577.5 405 L578 399.9 L580.5 400 L581 404.9 L582.5 404.8 L583 398.5 L585.5 398.6 L586 401.9 L586.5 401.9 L587 403.4 L587.5 403.4 L588 404.8 L588.5 404.8 L589 398.8 L590.5 398.8 L591 404.8 L591.5 404.8 L592 399 L593.5 399 L594 398.5 L594.5 398.5 L595 397.8 L596.5 397.8 L597 398.5 L599.5 398.8 L600 398.2 L602.5 398.1 L603.5 398.5 L604 398.1 L605.5 398.2 L606 397.8 L608.5 397.8 L609 398.5 L609.5 398.5 L611 397.5 L612.5 397.5 L613 404.5 L613.5 404.5 L614 397.7 L615 398.1 L616 397.9 L617.5 398.7 L620 394.7 L624 391.8 L630 390.2 L640 389.8 L640.5 389.8 L641.5 394.7 L643 398.2 L647 400.2 L651 402.7 L656 404.2 L666 406.5 L670 406.4 L676 404.7 L683 403.2 L686.5 401.8 L689 397.4 L691.5 394.9 L695.5 392.3 L700 390.8 L704 400.3 L707 403.3 L709.5 404.6 L711.5 404.6 L712 399.6 L713.5 399.5 L714 399 L714.5 399 L715 398.2 L716.5 398.2 L717 397.7 L717.5 397.7 L718 404.4 L718.5 404.4 L719 397.8 L720.5 397.8 L721.5 398 L722 404.3 L723.5 404.2 L724 397.8 L725.5 397.8 L726.5 397.4 L727 399.1 L728 397.5 L742.5 390.9 L750 389.9 L751 390.4 L752 397.4 L756 400.5 L762.5 403.2 L770.5 404.6 L771.5 405 L772 403.8 L772.5 403.8 L773 405.2 L793.5 405.2 L797 400.4 L800.5 394.9 L804 392.2 L808 391.2 L809 391.7 L810 397.4 L815 402.9 L820.5 404.9 L821 400.4 L822.5 400.4 L823 404.8 L823.5 404.8 L824 399.9 L824.5 399.9 L825 399.1 L826.5 399.1 L827.5 398.8 L828 399.5 L830.5 399.2 L831 404.6 L831.5 404.5 L832 398 L835.5 398 L836 398.8 L837 398.8 L838 397.1 L838.5 396.9 L840 394.9 L847.5 391.2 L857 389.9 L862.5 401.9 L865 402.9 L865.5 404.2 L866.5 390.9 L867 388 L868.5 381.3 L871 375 L873.5 371.8 L876.5 370 L881.5 368.8 L888.5 368.2 L889 384.6 L890.5 390.1 L892.5 395.2 L895 399.3 L897.5 401.9 L901 403.8 L903.5 404.5 L904 399.3 L905.5 399.3 L906 405.1 L906.5 405.1 L907 395.7 L907.5 395.7 L908 405.3 L911.5 405.6 L912 394.8 L913.5 394.8 L914.5 395.2 L915 396.2 L915.5 396.2 L916 403.7 L916.5 403.4 L917 394.8 L917.5 394.8 L918 402.8 L918.5 402.6 L919 395.2 L919.5 395.2 L920 402 L921.5 401.5 L922 395.8 L922.5 395.8 L923 400.9 L923.5 400.7 L924 394 L925.5 385.9 L927.5 379.2 L929 376.1 L931.5 373.1 L934.5 371.3 L941 369.9 L941.5 385.2 L943 390.5 L944.5 394.4 L947.5 399.6 L950.5 402.3 L951 394.2 L951.5 394.2 L952 396.2 L953.5 396.1 L954 404.1 L956.5 404.7 L957 390.7 L957.5 390.7 L958 405 L961.5 405.1 L962 391.9 L963.5 391.9 L964 392.7 L965.5 392.7 L966 394.3 L966.5 394.3 L967 390.4 L967.5 390.4 L968 405.2 L971 405.2 L972 391.3 L973.5 383.4 L975 378.1 L976.5 374.7 L979 371.4 L982.5 369.4 L987.5 368.4 L1011.5 367.5 L1012 383.8 L1013.5 389.4 L1015.5 394.8 L1018 399.1 L1021 402.1 L1024.5 404 L1031.5 405.6 L1032.5 405.2 L1033 396.6 L1034.5 396.6 L1035 398.3 L1035.5 398.3 L1036 385.1 L1037.5 385.1 L1038 393.6 L1038.5 393.6 L1039 377 L1039.5 377 L1040 375.6 L1040.5 375.6 L1041 397 L1041.5 397 L1042 403.8 L1042.5 403.8 L1043 374.4 L1044.5 374.4 L1045.5 374.7 L1046 371.4 L1046.5 371.4 L1047 404 L1047.5 404 L1048 373 L1050 373 L1050.5 385.2 L1051 387.7 L1052.5 392.7 L1054 396 L1055.5 398.4 L1058 401.4 L1059.5 402.5 L1060 400.8 L1061.5 400.8 L1062 404.2 L1062.5 404.5 L1063 400.6 L1063.5 400.6 L1064 399.4 L1065.5 399.4 L1066 405.4 L1069.5 405.7 L1070 396.2 L1070.5 396.2 L1071 405.7 L1074.5 405.7 L1075 392.5 L1075.5 392.5 L1076 405.7 L1077.5 405.7 L1078 396.6 L1079.5 396.6 L1080.5 405.2 L1081 392.6 L1082.5 384.2 L1084.5 377.4 L1086 374.2 L1088 371.7 L1091.5 369.5 L1096.5 368.4 L1120.5 367.5 L1121 367.5 L1121.5 385 L1123 390.4 L1125 395.4 L1127 398.9 L1130 402 L1133.5 403.9 L1141.5 405.7 L1142 398.2 L1142.5 398.2 L1143 393.8 L1143.5 393.8 L1144 397.7 L1144.5 397.7 L1145 405.6 L1145.5 405.6 L1146 381.6 L1146.5 381.6 L1147 380.9 L1148.5 380.9 L1149 375.7 L1150.5 375.7 L1151 405.4 L1151.5 405.4 L1152 376 L1152.5 376 L1153 374.7 L1154.5 374.7 L1155 373 L1155.5 373 L1156 391.7 L1156.5 391.7 L1157 372.2 L1157.5 372.2 L1158 370.1 L1158.5 370.1 L1159 389 L1159.5 391.9 L1160 386.7 L1161.5 392.2 L1163 395.7 L1164.5 398.2 L1167.5 401.7 L1169.5 403.1 L1170 400.6 L1171.5 400.6 L1172 404.5 L1172.5 404.7 L1173 396.7 L1174.5 396.5 L1175 397.1 L1175.5 397.1 L1176 395.5 L1176.5 395.5 L1177 396.9 L1177.5 396.9 L1178 405.7 L1178.5 405.7 L1179 394.6 L1179.5 394.6 L1180 394.2 L1181.5 394.2 L1182 405.7 L1182.5 405.7 L1183 397.6 L1184.5 397.6 L1185 394.4 L1185.5 394.4 L1186 405.7 L1188.5 405.7 L1189 398.5 L1189.5 405.4 L1190.5 390.6 L1192.5 380.9 L1195 374.5 L1197.5 371.4 L1201 369.4 L1206 368.4 L1230 367.5 L1230.5 384.2 L1232 389.8 L1234 395 L1236 398.5 L1239 401.8 L1242.5 403.8 L1246.5 404.9 L1251.5 405.7 L1252 394.7 L1253.5 394.7 L1254 385.9 L1255.5 385.9 L1256 382.1 L1257.5 382.1 L1258 392.9 L1258.5 392.9 L1259 377.3 L1259.5 377.3 L1260 375.5 L1262.5 375.1 L1263 398.2 L1263.5 398.2 L1264 394.1 L1264.5 394.1 L1265 405.3 L1265.5 405.3 L1266 393.3 L1266.5 393.3 L1267 391.4 L1267.5 391.4 L1268 371.2 L1268.5 398.5 L1269 385.7 L1270 390.1 L1272 395.2 L1274 398.5 L1277 401.9 L1279.5 403.6 L1280 399.9 L1280.5 399.9 L1281 397.1 L1282.5 397.1 L1283 405 L1283.5 405.1 L1284 396.9 L1285.5 396.9 L1286 405.7 L1290.5 405.7 L1291 397.3 L1291.5 397.3 L1292 394.8 L1292.5 394.8 L1293 396.3 L1293.5 396.3 L1294 405.7 L1294.5 405.7 L1295 394 L1295.5 394 L1296 405.7 L1298.5 405.7 L1299 402.2 L1299.5 391.9 L1301 383.8 L1303 377.1 L1304.5 374.1 L1306.5 371.5 L1310 369.4 L1315 368.4 L1339 367.5 L1339.5 383.3 L1340.5 387.3 L1343 394.6 L1345.5 399 L1348.5 402 L1352 403.9 L1359.5 405.6 L1360 398.7 L1360.5 398.7 L1361 404.5 L1361.5 404.5 L1362 390.3 L1362.5 390.3 L1363 387.6 L1363.5 387.6 L1364 383.5 L1364.5 383.5 L1365 382 L1365.5 382 L1366 378 L1366.5 378 L1367 377.2 L1368.5 377.4 L1369 374.2 L1369.5 374.2 L1370 402.1 L1370.5 402.1 L1371 373 L1372.5 373 L1373 373.8 L1374.5 373.8 L1375 405.3 L1375.5 405.3 L1376 373.7 L1376.5 373.7 L1377 372.1 L1377.5 372.1 L1378 388.5 L1378.5 387.2 L1380 392.4 L1381.5 395.9 L1383 398.3 L1386 401.8 L1388.5 403.5 L1389 401.4 L1389.5 401.4 L1390 404.4 L1390 414 L1389.5 416.5 L1389 416.5 L1388.5 414.9 L1386 416.6 L1383 420.1 L1381.5 422.5 L1380 426 L1378.5 431.2 L1378 429.9 L1377.5 447.7 L1377 447.7 L1376.5 444.6 L1376 444.6 L1375.5 418.6 L1375 418.6 L1374.5 444.3 L1373 444.3 L1372.5 443.7 L1371 443.7 L1370.5 427.4 L1370 427.4 L1369.5 443.1 L1369 443.1 L1368.5 441.2 L1368 441.2 L1367.5 439.5 L1366 439.9 L1365.5 436.7 L1365 436.7 L1364.5 433.4 L1364 433.4 L1363.5 430.9 L1363 430.9 L1362.5 426.4 L1362 426.4 L1361.5 413.1 L1361 413.1 L1360.5 419.2 L1360 419.2 L1359.5 412.8 L1352 414.5 L1348.5 416.4 L1345.5 419.4 L1343 423.8 L1340.5 431.1 L1339.5 435.1 L1339 450.5 L1315 449.6 L1310 448.6 L1306.5 446.5 L1304.5 443.9 L1303 440.9 L1301 434.3 L1299.5 426.3 L1299 416.1 L1298.5 412.7 L1296 412.7 L1295.5 423.8 L1295 423.8 L1294.5 412.7 L1294 412.7 L1293.5 422.8 L1292 422.9 L1291.5 421.9 L1291 421.9 L1290.5 412.7 L1286 412.7 L1285.5 422.2 L1284 422.2 L1283.5 413.3 L1283 413.4 L1282.5 419 L1281 419 L1280.5 417.4 L1280 417.4 L1279.5 414.8 L1277 416.5 L1274 419.9 L1272 423.2 L1270 428.3 L1269 432.7 L1268.5 419.9 L1268 446.8 L1267.5 426 L1267 426 L1266.5 417.4 L1266 417.4 L1265.5 418.6 L1265 418.6 L1264.5 417.4 L1264 417.4 L1263.5 425.7 L1263 425.7 L1262.5 442.6 L1262 442.6 L1261.5 441.8 L1260 441.8 L1259.5 440.6 L1259 440.6 L1258.5 423.2 L1258 423.2 L1257.5 438.3 L1256 438.3 L1255.5 431 L1254 431 L1253.5 423.1 L1252 423.1 L1251.5 412.7 L1246.5 413.5 L1242.5 414.6 L1239 416.6 L1236 419.9 L1234 423.4 L1232 428.6 L1230.5 434.2 L1230 450.5 L1206 449.6 L1201 448.6 L1197.5 446.7 L1195 443.5 L1192.5 437.2 L1190.5 427.6 L1189.5 412.9 L1189 421.9 L1188.5 412.7 L1186 412.7 L1185.5 421 L1185 421 L1184.5 422.3 L1183 422.3 L1182.5 412.7 L1182 412.7 L1181.5 423.8 L1180 423.8 L1179 424.2 L1178.5 412.7 L1178 412.7 L1177.5 422.3 L1177 422.3 L1176.5 425.6 L1176 425.6 L1175.5 423.7 L1175 423.7 L1174.5 420.3 L1174 420.3 L1173.5 422.3 L1173 422.3 L1172.5 413.7 L1172 413.9 L1171.5 417.6 L1170 417.6 L1169.5 415.3 L1167.5 416.7 L1164.5 420.2 L1163 422.7 L1160.5 429.2 L1160 431.7 L1159.5 426.5 L1159 431.6 L1158.5 447.7 L1158 447.7 L1157.5 444.1 L1157 444.1 L1156.5 427.8 L1156 427.8 L1155.5 445.9 L1155 445.9 L1154.5 444 L1153 444 L1152.5 443.5 L1152 443.5 L1151.5 424.5 L1151 424.5 L1150.5 441.6 L1149 441.6 L1148.5 438.4 L1147 438.4 L1146.5 436.6 L1146 436.6 L1145.5 420.2 L1145 420.2 L1144.5 412.8 L1144 412.8 L1143.5 424.3 L1143 424.3 L1142.5 419.9 L1142 419.9 L1141.5 412.7 L1133.5 414.5 L1130 416.4 L1127 419.5 L1125 423 L1123 428 L1121.5 433.4 L1121 450.5 L1120.5 450.5 L1096.5 449.6 L1091.5 448.5 L1088 446.3 L1086 443.8 L1084.5 440.7 L1082.5 433.9 L1081 425.7 L1080.5 413.2 L1080 420.9 L1079.5 423.1 L1078 423.1 L1077.5 412.7 L1076 412.7 L1075.5 424.8 L1075 424.8 L1074.5 412.7 L1071 412.7 L1070.5 424.7 L1070 424.7 L1069.5 412.7 L1066 413 L1065.5 419 L1063 418.7 L1062.5 413.9 L1062 414.2 L1061.5 418.5 L1061 418.5 L1060.5 415.3 L1058.5 416.6 L1055.5 420 L1054 422.4 L1052.5 425.7 L1051 430.7 L1050.5 433.2 L1050 447 L1049.5 447.8 L1049 447.8 L1048.5 444.7 L1048 444.7 L1047.5 414.7 L1047 414.7 L1046.5 446.5 L1046 446.5 L1045.5 444.3 L1045 444.3 L1044.5 443.3 L1043 443.3 L1042.5 420.2 L1042 420.2 L1041.5 424.8 L1041 424.8 L1040.5 441.2 L1040 441.2 L1039.5 440.1 L1039 440.1 L1038.5 417.1 L1038 417.1 L1037.5 433.8 L1036 433.8 L1035.5 416.2 L1035 416.2 L1034.5 421.4 L1033 421.4 L1032.5 412.7 L1024.5 414.4 L1021 416.3 L1018 419.3 L1015.5 423.6 L1013.5 429 L1012 434.6 L1011.5 450.5 L987.5 449.6 L982.5 448.6 L979 446.6 L976.5 443.3 L975 440 L973.5 434.7 L972 427 L971 413.2 L968 413.2 L967.5 426 L967 426 L966.5 424.8 L966 424.8 L965.5 425.8 L964 425.8 L963.5 427.1 L962 427.1 L961.5 413.3 L958 413.4 L957.5 425.1 L957 425.1 L956.5 413.7 L954 414.3 L953.5 424.8 L953 424.8 L952.5 422.3 L952 422.3 L951.5 424.5 L951 424.5 L950.5 416.1 L947.5 418.8 L944.5 424 L943 427.9 L941.5 433.2 L941 448.1 L934.5 446.8 L931.5 445 L929 442 L927.5 438.9 L925.5 432.3 L924 424.2 L923.5 417.7 L923 417.5 L922.5 426.4 L922 426.4 L921.5 416.9 L920 416.4 L919.5 425.5 L919 425.5 L918.5 415.8 L918 415.6 L917.5 426.1 L917 426.1 L916.5 414.9 L916 414.7 L915.5 425.4 L915 425.4 L914.5 423.6 L913.5 423.2 L912 423.2 L911.5 412.8 L908 413.1 L907.5 423 L907 423 L906.5 413.3 L906 413.3 L905.5 420.8 L904 420.8 L903.5 413.9 L901 414.6 L897.5 416.5 L895 419.1 L892.5 423.2 L890.5 428.3 L889 433.8 L888.5 449.8 L881.5 449.2 L876.5 448 L873.5 446.2 L871 443.1 L868.5 436.8 L867 430.2 L866.5 427.3 L865.5 414.2 L865 415.5 L862.5 416.4 L859.5 422.4 L857 428.7 L847.5 427.4 L840 423.7 L838.5 421.8 L838 421.8 L837 419.8 L836.5 419.7 L836 419.7 L835.5 421.4 L834 421.4 L833.5 420.4 L832 420.4 L831.5 414.1 L831 414.1 L830.5 420.1 L830 420.1 L829.5 419.6 L828 419.6 L827.5 420.4 L827 420.4 L826.5 419 L826 419 L825.5 419.8 L824 419.8 L823.5 413.6 L823 413.6 L822.5 419.2 L821 419.2 L820.5 413.5 L815 415.4 L810 421.2 L809 426.9 L808 427.4 L804 426.2 L800.5 422.9 L793.5 413.4 L773 413.2 L772.5 414 L772 414 L771.5 413.4 L770.5 414.1 L768 414.2 L767.5 415 L765.5 414.8 L762.5 415.4 L756 418.1 L752 421.2 L751 427.9 L750 428.7 L742.5 427.4 L735 424.4 L728 420.9 L727 419.3 L726.5 420.6 L726 420.6 L725.5 419.5 L724 419.5 L723.5 414.2 L722 414.1 L721.5 419.6 L721 419.6 L720.5 419 L719 419 L718.5 414 L718 414 L717.5 420 L717 420 L716.5 419 L715 419 L714 418.7 L713.5 420 L713 420 L712.5 418.8 L712 418.8 L711.5 413.8 L709.5 413.8 L707 415.1 L704 418.1 L701.5 422.8 L700.5 426.7 L700 427.6 L696 425.8 L692 422.9 L686.5 416.6 L683 414.7 L670 412.2 L666 412.2 L656 413.7 L651 415.2 L647 417.2 L643 418.7 L640.5 429.2 L640 429.2 L630 428.2 L624 425.7 L620 423.2 L617.5 420.2 L616 421 L615 421.1 L614.5 420.3 L614 420.3 L613.5 415.7 L613 415.7 L612.5 420 L611 420 L610.5 420.6 L609 420.8 L608.5 420.1 L606 420.1 L605.5 420.7 L605 420.7 L604.5 420.1 L604 420.1 L603.5 421 L603 421 L602.5 420.2 L600 420.5 L599.5 420 L599 420 L598.5 420.6 L594 420.9 L593.5 420.2 L592 420.2 L591.5 413.6 L591 413.6 L590.5 419.6 L589 419.6 L588.5 413.6 L586 413.5 L585.5 420 L584 420 L583.5 419.1 L583 419.1 L582.5 416.5 L582 416.5 L581.5 413.5 L581 413.5 L580.5 419.4 L579 419.4 L578 419.2 L577.5 413.4 L577 413.4 L576.5 418.1 L576 418.1 L574.5 417.5 L573 417.9 L572.5 417.2 L572 417.2 L571.5 415.6 L570 415.6 L569.5 414.4 L567 414.4 L566.5 413.7 L564 413.9 L563 413.7 L562.5 413.2 L550 413.2 L545 415.4 L538.5 419.3 L533.5 421.7 L480 421.7 L472.5 421.4 L465 419.9 L455 416.4 L451 415.9 L449 413.7 L370 413 L357 413.8 L347 418 L343 416.2 L339.5 413.7 L338 413.4 L314 413.2 L309.5 412.2 L308.5 412.6 L308 412.3 L307 410.9 L306 412.7 L305 410.2 L304 412.6 L303.5 412.8 L302 410.7 L102 410.6Z" fill="#224b89"/>
<path d="M451.9 404.4 V410.4 M453.6 406 V410.7 M457.4 403.1 V410 M459 408.3 V410.7 M464.9 407.4 V415.1 M469.6 403.5 V413.9 M473 406.9 V416.9 M477.3 399.2 V419.5 M483.2 401.9 V416.5 M489.6 405.5 V418.6 M493.8 403.2 V414.2 M496.7 401.2 V410.8 M501.2 403.8 V413.3 M506.4 400.2 V412.4 M510.4 399.9 V417 M516.8 406.7 V411.2 M520.8 404.7 V416.2 M526 403.7 V416.6 M532.4 403.4 V419.8 M537.9 401.1 V415.9 M541.7 403.9 V413 M572.7 408 V415.6 M578.3 402.6 V411.8 M584 408.5 V413.5 M585.8 402.6 V414.7 M590.7 408.4 V410.8 M592.5 401.5 V413 M595 404.6 V414.5 M599.2 403.2 V410.6 M602.2 402.8 V417.3 M605.2 400.9 V413.3 M606.8 401.5 V411.5 M612.5 402.2 V412.2 M618.1 405.3 V413.5 M623.3 398.3 V419.4 M626.1 396.1 V417.9 M630.3 394.6 V425.4 M631.9 394.9 V424.5 M636.5 403.9 V419 M641.3 399.5 V424.4 M646.5 407 V415.1 M649.6 407.3 V410.6 M690.5 404.3 V414.8 M694.3 395.6 V415.1 M697.1 399.4 V412.1 M701.1 399.7 V418.7 M704 406.2 V411.5 M713.4 405.7 V417.2 M717.4 403.6 V410.1 M720.5 401.7 V414.9 M725.3 401.5 V416 M730.4 403.4 V419.7 M736.1 396.8 V419.6 M740.3 399.8 V414.4 M742.6 402 V423.3 M744.7 402.5 V414.7 M746.7 392.4 V423.6 M751.1 392.4 V412.2 M752.7 406.1 V411.8 M756.1 407.7 V415.4 M800.3 402.8 V415.6 M804.2 394 V412.1 M808.6 401.3 V418.6 M814.5 406.1 V411.9 M822.2 407.7 V412.7 M825.4 401.8 V413.9 M828.3 401.1 V411.2 M833.6 407.6 V412.1 M837.1 407.9 V416.3 M839.9 402.2 V414 M841.9 396.4 V411.6 M843.5 404.3 V417.7 M849.8 405 V419.3 M854 402.4 V422.8 M855.6 406.8 V418.6 M861.1 404.6 V417.3 M863.1 405 V409.3 M868.7 389.3 V425.4 M875 387.9 V436 M879.2 376.2 V429.2 M881 387.2 V444.1 M882.7 394.7 V431.6 M885 383 V419.4 M888.3 378.7 V432.7 M894.3 404.9 V414.8 M913.8 401.9 V412.7 M919.2 404.1 V424 M924.7 405.8 V423.9 M927.2 387.1 V433.1 M929.4 390.9 V422.3 M933.2 389.7 V424.2 M938.9 402.1 V424.5 M942.8 391.3 V423.3 M945.3 407.5 V413.4 M947.4 403.2 V414.5 M952.1 407.8 V417.3 M957.1 398.3 V412.1 M966.4 402.7 V414.3 M971.7 403.8 V414.1 M976.3 396.4 V425.1 M979.6 387.5 V430 M983 381.1 V445.1 M984.8 375.5 V444.7 M988.2 401.5 V435.2 M994.3 392.2 V418.1 M999 401 V422.3 M1000.9 369.4 V417.2 M1004.1 390.9 V417.5 M1010.5 386.5 V438.1 M1015 403.8 V422.1 M1020.5 403.2 V412.9 M1038 403.3 V423.4 M1041.6 403.1 V416.9 M1044.2 386.2 V428.7 M1045.8 392 V441 M1050.1 376.2 V439.9 M1053.9 405.1 V410.7 M1059.2 408.3 V412.3 M1063.3 405.8 V409.8 M1070.6 404.9 V414.3 M1082.7 393.6 V424.2 M1085.4 382.8 V417.4 M1090.6 397.6 V436.4 M1095.9 370.6 V431.9 M1099 379.6 V416.2 M1100.5 401 V426.6 M1107 382.8 V419.2 M1111.2 388.4 V428.1 M1114 389.3 V443 M1115.7 393.1 V448 M1121.8 390.9 V414.2 M1124.8 404.4 V418.5 M1129.8 404.1 V414 M1148.5 404.1 V415.1 M1150.7 393.8 V434.6 M1153.9 384.6 V436.3 M1158.4 378.4 V436 M1160.6 395 V415.3 M1163.5 407.7 V420 M1165.1 402.4 V413.8 M1168.2 405.8 V410.6 M1175.7 407.1 V418 M1180.1 400 V413.5 M1184.4 403.7 V419 M1189.1 407.3 V411 M1192.7 384.1 V431.2 M1198.8 376.2 V433.1 M1200.7 386.8 V436.1 M1207.1 402 V431.9 M1212.8 391.7 V433.4 M1218.2 370.5 V443.2 M1223.8 386.4 V426.3 M1228.3 397.1 V440.6 M1230.7 391.5 V415.3 M1234.7 405.5 V412.8 M1237.9 407 V411 M1253.7 398.7 V415.2 M1259.5 385.3 V428.6 M1262.9 384.7 V416.3 M1268 375.3 V429.7 M1271.3 399.2 V422.6 M1275.8 404.4 V411.8 M1282 402.9 V412.5 M1293.4 400.4 V419.4 M1300.5 399.9 V423 M1303.7 403.2 V436.9 M1306.1 374 V433.6 M1308 373.7 V424.9 M1314.2 375.6 V428.6 M1320.5 375.4 V443.4 M1324.6 371.1 V429.6 M1330.2 398.4 V445 M1334.5 385.9 V434 M1336.9 389.2 V443.9 M1341.8 393.5 V426.2 M1347.6 404.8 V413.2 M1362.8 406.6 V420.7 M1365.7 389.6 V420.7 M1369.8 391.4 V425 M1372.6 389.6 V427.5 M1377.3 392.6 V416 M1379.4 399 V418.1 M1381.7 401.3 V418.4 M1385.9 407.2 V414 M1389.8 404.2 V412.6" stroke="#edf0f5" stroke-width=".7" opacity=".2" fill="none"/>
<path d="M667.5 409.2 V422.2 M673.7 400.2 V409.2 M776.2 409.2 V423.2 M782.5 401.2 V409.2" stroke="#224b89" stroke-width="1" fill="none" opacity=".8"/>
<path d="M102 499.5 H1390 M102 589.5 H1390 M102 679.5 H1390 M102 769.5 H1390" stroke="#a4a4a4" stroke-width="1.3" fill="none"/>
<path d="M102 497.8 L305 497.8 L306 495.8 L310 487.8 L315 482.8 L320 477.3 L330 466.8 L339.5 457.6 L353 457.6 L427.5 469.5 L452.5 457.6 L545.5 457.6 L580 482.3 L615.5 457.6 L641.3 457.6 L666 485.8 L667.3 485.8 L667.8 477.8 L686 457.6 L701.3 457.6 L726.5 487.3 L727.5 489.8 L729 492.8 L730.5 497.8 L854.5 497.8 L855 487.8 L856 476.8 L858.3 468.8 L861.5 461.4 L866 457.6 L889.9 457.6 L906.4 491.1 L907.5 493.8 L908.5 497.8 L914.2 497.8 L914.7 487.8 L915.8 476.8 L918 469.1 L921.3 461.4 L924 457.6 L941.6 457.6 L959.2 492.2 L960.2 494.8 L961 497.8 L963.2 497.8 L963.6 487.8 L964.7 474.8 L966.9 465.8 L970.2 458.3 L971.9 457.6 L1012.6 457.6 L1013.8 463.8 L1027.5 487.8 L1029.7 492.3 L1031 497.8 L1390 497.8 L1390 499.8 L1031 499.8 L1029.7 505.3 L1027.5 509.8 L1013.8 533.8 L1012.6 540 L971.9 540 L970.2 539.3 L966.9 531.8 L964.7 522.8 L963.6 509.8 L963.2 499.8 L961 499.8 L960.2 502.8 L959.2 505.4 L941.6 540 L924 540 L921.3 536.2 L918 528.5 L915.8 520.8 L914.7 509.8 L914.2 499.8 L908.5 499.8 L907.5 503.8 L906.4 506.5 L889.9 540 L866 540 L861.5 536.2 L858.3 528.8 L856 520.8 L855 509.8 L854.5 499.8 L730.5 499.8 L729 504.8 L727.5 507.8 L726.5 510.3 L701.3 540 L686 540 L667.8 519.8 L667.3 511.8 L666 511.8 L641.3 540 L615.5 540 L580 515.8 L545.5 540 L452.5 540 L427.5 528.5 L353 540 L339.5 540 L330 530.8 L320 520.3 L315 514.8 L310 509.8 L306 501.8 L305 499.8 L102 499.8Z" fill="#4e9a06"/>
<path d="M306 497.3 V500.3 M307.2 495 V502.6 M308.7 491.9 V505.7 M310.2 489.1 V508.5 M311.5 487.8 V509.8 M662.9 483.8 V513.8 M664.8 485.9 V511.7 M668 479.1 V518.5 M669.6 477.3 V520.3 M671 475.8 V521.8 M723.7 485.5 V512.1 M725.3 487.3 V510.3 M727.1 490.3 V507.3 M906.4 492.6 V505 M907.8 496.5 V501.1 M958.2 491.8 V505.8 M959.9 495.4 V502.2 M1028.5 491.3 V506.3 M1029.8 494.3 V503.3 M576.3 481.2 V516.9 M578.2 482.5 V515.6 M579.7 483.6 V514.5 M580 483.8 V514.3 M581.3 482.9 V515.2 M582.6 482 V516.1" stroke="#f0f5ea" stroke-width=".7" opacity="0.67" fill="none"/>
<path d="M312.9 486.4 V511.2 M314.4 484.9 V512.7 M316 483.2 V514.4 M317.6 481.5 V516.1 M319.3 479.6 V518 M321 477.8 V519.8 M323.2 475.5 V522.1 M655 474.7 V522.9 M657.2 477.2 V520.4 M659.4 479.7 V517.9 M660.9 481.5 V516.1 M672.4 474.2 V523.4 M674.2 472.2 V525.4 M676.1 470 V527.6 M717.4 478.1 V519.5 M718.9 479.9 V517.7 M720.9 482.2 V515.4 M722.4 483.9 V513.7 M900.6 480.8 V516.8 M902.7 485 V512.6 M904.7 489.2 V508.4 M953.4 482.4 V515.2 M955.1 485.6 V512 M956.7 488.9 V508.7 M1022.6 480.8 V516.8 M1024.2 483.6 V514 M1026.5 487.5 V510.1 M569.7 476.4 V521.5 M571.6 477.8 V520.2 M573.2 478.9 V519.1 M574.9 480.2 V517.9 M584 481 V517 M585.6 479.9 V518.1 M587.3 478.7 V519.3 M589.3 477.3 V520.6" stroke="#f0f5ea" stroke-width=".7" opacity="0.50" fill="none"/>
<path d="M325.1 473.4 V524.2 M327.1 471.4 V526.2 M328.9 469.5 V528.1 M331 467.3 V530.3 M333.6 464.8 V532.8 M648.1 466.9 V530.7 M650.8 469.9 V527.7 M653 472.5 V525.1 M677.9 468.1 V529.5 M680.1 465.7 V531.9 M708.8 467.9 V529.7 M710.8 470.4 V527.2 M712.9 472.7 V524.9 M715.1 475.4 V522.2 M894.6 468.6 V529 M896.6 472.8 V524.8 M898.7 477 V520.6 M946.6 468.9 V528.7 M949.2 474.1 V523.5 M951.5 478.6 V519 M1017.2 471.2 V526.4 M1020 476.2 V521.4 M564.8 472.9 V524.9 M567.4 474.8 V523.2 M591.1 476.1 V521.9 M593.1 474.7 V523.2 M595.4 473.1 V524.8" stroke="#f0f5ea" stroke-width=".7" opacity="0.33" fill="none"/>
<path d="M336.4 462.1 V535.5 M338.6 460 V537.6 M645 463.3 V534.3 M682.7 462.7 V534.9 M704 462.3 V535.3 M706.3 465.1 V532.5 M892 463.4 V534.2 M944 463.8 V533.8 M1015 467.4 V530.2 M560 469.5 V528.3 M562.5 471.3 V526.6 M597.8 471.4 V526.4" stroke="#f0f5ea" stroke-width=".7" opacity="0.17" fill="none"/>
<path d="M347.8 464.4 V535.4 M353.4 472.7 V519.5 M363.2 474.2 V521.3 M371.1 482.4 V518 M379.3 468.6 V518.1 M390 476.8 V521 M398 472.2 V523.5 M400.4 469.9 V520.4 M404 472.2 V520.4 M409.8 477.2 V513.8 M414.5 485.3 V525.7 M416.5 478.1 V526 M423.5 477.7 V525.4 M428.7 488.5 V525.2 M431.9 470.6 V514.1 M435.3 468.2 V514.9 M442.5 481 V514.3 M452.3 464.7 V536.1 M463.2 475.3 V531.6 M473.4 460.2 V536 M475.9 478.3 V519.8 M482.6 473.6 V527 M484.8 469.2 V525 M490.6 478.5 V525.7 M496.8 476.8 V519.3 M501.5 467.7 V525 M506.3 473.2 V526 M514.6 466.6 V534 M516.8 461.8 V529.5 M523.6 469.6 V533.8 M532.6 475.4 V537.6 M534.8 460.2 V531.3 M544.8 463.6 V525 M553.8 477.7 V528.8 M557.1 472.8 V516 M565.7 478.3 V518.3 M568.3 489.9 V506.6 M575.3 484.9 V514.6 M582.1 487.8 V496.1 M588.8 487.6 V518.7 M594 479.8 V510.8 M601.2 486.3 V524.8 M610.1 477.6 V529.1 M614.7 477.5 V528.2 M624 462.6 V521.6 M631.9 463.3 V529 M637.8 477.2 V527.5 M689.4 479.1 V528.5 M694.7 473.5 V519.8 M698.7 468.4 V525.2 M875.8 472.4 V521.5 M878.4 465.9 V518.1 M880.8 474.1 V521.6 M886 471.4 V535 M888.5 464.3 V522.2 M932.9 462 V525.7 M975.1 474.6 V530.9 M985.3 469.6 V532.2 M993.8 465.7 V521.6 M1000 475.3 V532.5 M1009.7 463.9 V520.5" stroke="#f0f5ea" stroke-width=".7" opacity=".22" fill="none"/>
<path d="M296 498.8 L298 498.2 L301 498 L302.5 499.3 L303.6 503.3 L304.6 500.8 L305.4 494.8 L306 498.8 M729.5 492.8 L730.3 501.8 L731.3 503.8 L732 495.8 L733.3 493.3 L734.6 502.8 L735.6 504.3 L737.2 500.8 L738.5 494.8 L740.5 493.8 L741.8 495.3 L742.5 498.8 M907 505.8 L908 501.8 L909.2 492.3 L910.3 495.8 L911.3 500.8 L912.6 503.1 L914 500.8 L914.6 498.8 M959.6 505.8 L960.5 499.8 L961.5 492.3 L962.5 496.8 L963.3 498.8 M1030.6 498.8 L1031.2 496.5 L1032 503.6 L1032.8 495.3 L1033.7 500.9 L1034.8 494.9 L1035.6 500.5 L1036.5 495 L1037.4 501.4 L1038.4 494.6 L1039.3 502.3 L1040.2 496.5 L1041.3 502.7 L1042.2 497.1 L1043.4 503.2 L1044.2 494.7 L1045.1 503.9 L1046.2 494.9 L1047.3 501.8 L1048.4 498.8" stroke="#4e9a06" stroke-width="1.3" fill="none" stroke-linejoin="round"/>
<path d="M728.8 498.8 V537.5 M733 481.3 V503.8 M771.8 492.6 V512.5 M775.5 487.6 V510.1 M779.5 476.3 V522.5 M781.8 473.8 V523.8 M835 488.8 V511.3 M837 487.6 V508.8 M841.2 491.3 V503.8 M1028.8 470.1 V498.8 M1050.8 463.8 V526.3 M1062 485.1 V513.8 M1068 498.8 V506.3 M1075 471.3 V527.5 M1078 463.8 V535 M1121.8 460.1 V537.5 M1148.8 495.1 V503.1 M1152 494.6 V500.1 M1156.8 496.3 V503.8 M1184.5 472.6 V526.3 M1227.5 472.6 V537.5" stroke="#4e9a06" stroke-width="1.4" fill="none"/>
<path d="M742 458.8 V538 M753 466.3 V530 M755.5 468.8 V528.8 M1230.5 458.8 V536.3" stroke="#4e9a06" stroke-width="1.3" fill="none"/>
<path d="M747.5 458.1 V539.5 M1053.8 471.3 V526.3" stroke="#4e9a06" stroke-width="1.6" fill="none"/>
<path d="M761.5 477.6 V523.8 M764.2 476.3 V516.3 M769 481.3 V513.8 M812 478.8 V532.5 M815.8 468.8 V530 M1133.5 483.8 V516.3" stroke="#4e9a06" stroke-width="1.2" fill="none"/>
<path d="M791.5 462.6 V535" stroke="#4e9a06" stroke-width="2.2" fill="none"/>
<path d="M803.8 458.1 V539.5" stroke="#4e9a06" stroke-width="2.8" fill="none"/>
<path d="M1085 458.1 V539.5" stroke="#4e9a06" stroke-width="4.3" fill="none"/>
<path d="M1096.5 458.8 V538.8 M1100.8 458.1 V539.5 M1106.2 458.8 V538.8" stroke="#4e9a06" stroke-width="1.8" fill="none"/>
<path d="M1117.5 458.1 V539.5" stroke="#4e9a06" stroke-width="5" fill="none"/>
<path d="M102 587.8 L305 587.8 L306 585.8 L310 577.8 L315 572.8 L320 567.3 L330 556.8 L339.5 547.6 L353 547.6 L427.5 559.5 L452.5 547.6 L545.5 547.6 L580 572.3 L615.5 547.6 L641.3 547.6 L666 575.8 L667.3 575.8 L667.8 567.8 L686 547.6 L701.3 547.6 L726.5 577.3 L727.5 579.8 L729 582.8 L730.5 587.8 L854.5 587.8 L855 577.8 L856 566.8 L858.3 558.8 L861.5 551.4 L866 547.6 L889.9 547.6 L906.4 581.1 L907.5 583.8 L908.5 587.8 L914.2 587.8 L914.7 577.8 L915.8 566.8 L918 559.1 L921.3 551.4 L924 547.6 L941.6 547.6 L959.2 582.2 L960.2 584.8 L961 587.8 L963.2 587.8 L963.6 577.8 L964.7 564.8 L966.9 555.8 L970.2 548.3 L971.9 547.6 L1012.6 547.6 L1013.8 553.8 L1027.5 577.8 L1029.7 582.3 L1031 587.8 L1390 587.8 L1390 589.8 L1031 589.8 L1029.7 595.3 L1027.5 599.8 L1013.8 623.8 L1012.6 630 L971.9 630 L970.2 629.3 L966.9 621.8 L964.7 612.8 L963.6 599.8 L963.2 589.8 L961 589.8 L960.2 592.8 L959.2 595.4 L941.6 630 L924 630 L921.3 626.2 L918 618.5 L915.8 610.8 L914.7 599.8 L914.2 589.8 L908.5 589.8 L907.5 593.8 L906.4 596.5 L889.9 630 L866 630 L861.5 626.2 L858.3 618.8 L856 610.8 L855 599.8 L854.5 589.8 L730.5 589.8 L729 594.8 L727.5 597.8 L726.5 600.3 L701.3 630 L686 630 L667.8 609.8 L667.3 601.8 L666 601.8 L641.3 630 L615.5 630 L580 605.8 L545.5 630 L452.5 630 L427.5 618.5 L353 630 L339.5 630 L330 620.8 L320 610.3 L315 604.8 L310 599.8 L306 591.8 L305 589.8 L102 589.8Z" fill="#c4a000"/>
<path d="M306 587.3 V590.3 M307.5 584.3 V593.3 M308.9 581.6 V596 M310.3 579 V598.6 M311.9 577.4 V600.2 M663.3 574.2 V603.4 M665.1 576.3 V601.3 M668 569.1 V608.5 M669.3 567.6 V610 M670.9 565.9 V611.7 M724.7 576.7 V600.9 M726.5 578.8 V598.8 M727.9 582.1 V595.5 M906.5 582.7 V594.9 M958.8 582.9 V594.7 M960.4 587 V590.6 M1028.9 582.2 V595.4 M577.3 571.9 V606.2 M579 573.1 V605 M580 573.8 V604.3 M581.3 572.9 V605.2 M582.9 571.8 V606.3" stroke="#faf8ec" stroke-width=".7" opacity="0.67" fill="none"/>
<path d="M313.8 575.5 V602.1 M315.5 573.7 V603.9 M317.3 571.8 V605.8 M319.4 569.5 V608.1 M321.4 567.4 V610.2 M323.6 565 V612.6 M656.4 566.4 V611.2 M658.7 569 V608.6 M660.2 570.7 V606.9 M661.9 572.6 V605 M672.2 564.4 V613.2 M673.9 562.6 V615 M675.8 560.4 V617.2 M715.5 565.8 V611.8 M717.9 568.7 V608.9 M719.7 570.8 V606.8 M721.8 573.3 V604.3 M723.2 574.9 V602.7 M901.1 571.9 V605.7 M902.8 575.3 V602.3 M904.6 579 V598.6 M953.3 572.1 V605.5 M955 575.4 V602.2 M957 579.4 V598.2 M1023.7 572.6 V605 M1025.5 575.7 V601.9 M1027 578.4 V599.2 M570 566.6 V611.3 M571.9 568 V610 M573.7 569.3 V608.7 M575.3 570.4 V607.6 M584.3 570.8 V607.2 M585.7 569.9 V608.2 M587.5 568.6 V609.4 M589.2 567.4 V610.6" stroke="#faf8ec" stroke-width=".7" opacity="0.50" fill="none"/>
<path d="M325.4 563.1 V614.5 M327.8 560.6 V617 M329.8 558.5 V619.1 M332.2 556.1 V621.5 M334.9 553.6 V624 M650 559.1 V618.5 M652.1 561.5 V616.1 M653.9 563.5 V614.1 M677.5 558.5 V619.1 M679.8 555.9 V621.7 M681.7 553.9 V623.7 M709.3 558.5 V619.1 M711.6 561.2 V616.4 M713.6 563.6 V614 M894.7 558.9 V618.7 M896.9 563.3 V614.3 M899 567.5 V610.1 M946.7 559.2 V618.4 M948.9 563.4 V614.2 M950.8 567.1 V610.5 M1017.9 562.4 V615.2 M1020.1 566.4 V611.2 M1022 569.6 V608 M563 561.6 V616.2 M565.9 563.7 V614.2 M568.2 565.4 V612.6 M591.2 566 V612 M593.1 564.7 V613.2 M595 563.4 V614.5 M597 562 V615.9" stroke="#faf8ec" stroke-width=".7" opacity="0.33" fill="none"/>
<path d="M336.9 551.6 V626 M339.6 549.1 V628.5 M645 553.3 V624.3 M647.6 556.3 V621.3 M704 552.3 V625.3 M706.9 555.7 V621.9 M892 553.4 V624.2 M944 553.8 V623.8 M1015 557.4 V620.2 M560 559.5 V618.3 M599.5 560.2 V617.6" stroke="#faf8ec" stroke-width=".7" opacity="0.17" fill="none"/>
<path d="M346.6 568.2 V614.7 M349.4 553.6 V611.6 M355.1 568 V625.8 M365.5 565.3 V619.6 M371.4 562.5 V607.1 M375.3 571.2 V606 M385.9 569.2 V610.5 M392.8 564 V604.1 M398 565 V617.3 M402.9 562.1 V613.4 M408.7 566.1 V606.8 M418.3 579.1 V608.2 M427.3 562.2 V613.3 M432.1 561.9 V613.1 M442.3 567.7 V612.2 M450.3 551.4 V619.4 M452.7 562.5 V618.8 M460 554.4 V611.9 M464.7 559.8 V612.2 M468.2 567.8 V614.4 M475.6 555.3 V611.9 M480.7 557.6 V618.4 M485.9 557.9 V610.4 M492.8 557.2 V612.6 M500.5 554.4 V622.3 M505.9 561.7 V627.4 M508.2 561.1 V610 M514.3 555 V611 M519.1 565.5 V625.3 M525.5 564.6 V617.8 M529 563.5 V622.7 M537.2 563.5 V619.4 M540.8 554.3 V614.6 M548.7 569.8 V617.9 M553.6 560.2 V603.8 M558.3 572 V608.5 M565.6 578.9 V612 M576.4 576 V593 M581.4 581.7 V588.3 M592.2 571.4 V597.3 M599.4 574.4 V605.7 M602.6 568.1 V606.6 M613.4 558.7 V610.2 M617.3 560.3 V615.4 M624 554.5 V608.8 M627.3 562.9 V626.3 M630.4 555.8 V624.2 M633.8 568.8 V625.8 M695.4 551.7 V615.7 M868.6 563.3 V621.5 M873.1 555.9 V608.6 M875.8 550.4 V626.8 M886.3 562.6 V625.5 M888.4 565.5 V617.8 M929.4 565.3 V611 M933.1 559 V623.7 M936.8 549.9 V609.9 M977.2 551.8 V619.7 M981.5 556.8 V618.6 M985.3 550.2 V612.7 M988.8 567.3 V616.1 M991.6 559.4 V615 M993.8 561.7 V614.4 M1000.6 552.9 V617.9 M1004.1 564.1 V625.5 M1007.8 551.2 V610.9 M1011.6 561.5 V618.7" stroke="#faf8ec" stroke-width=".7" opacity=".22" fill="none"/>
<path d="M296 588.8 L298 588.2 L301 588 L302.5 589.3 L303.6 593.3 L304.6 590.8 L305.4 584.8 L306 588.8 M729.5 582.8 L730.3 591.8 L731.3 593.8 L732 585.8 L733.3 583.3 L734.6 592.8 L735.6 594.3 L737.2 590.8 L738.5 584.8 L740.5 583.8 L741.8 585.3 L742.5 588.8 M907 595.8 L908 591.8 L909.2 582.3 L910.3 585.8 L911.3 590.8 L912.6 593.1 L914 590.8 L914.6 588.8 M959.6 595.8 L960.5 589.8 L961.5 582.3 L962.5 586.8 L963.3 588.8 M1030.6 588.8 L1031.2 587 L1032.4 593.9 L1033.4 587.5 L1034.4 590.4 L1035.3 584.6 L1036.1 590.7 L1036.9 585 L1037.7 590.9 L1038.4 587.6 L1039.4 590.1 L1040.3 586.8 L1041.5 593.9 L1042.5 586.6 L1043.5 591.4 L1044.4 584.6 L1045.6 593.2 L1046.7 587.2 L1047.4 590 L1048.4 588.8" stroke="#c4a000" stroke-width="1.3" fill="none" stroke-linejoin="round"/>
<path d="M723.8 588.8 V613.8 M842 582 V588.8 M846.2 588.8 V593.8 M1029.5 557.5 V588.8 M1032 588.8 V627.5 M1035 588.8 V626.3 M1144.2 585 V626.3 M1159.5 552.5 V588.8 M1229.2 565 V588.8 M1247.2 580 V588.8 M1256.5 582 V588.8" stroke="#c4a000" stroke-width="1.4" fill="none"/>
<path d="M758.8 561.3 V600 M763.5 565 V610 M767.5 570 V606.3 M771.5 575 V603.8 M787.8 557.5 V621.3 M1061.2 572.5 V605 M1073 566.3 V607.5 M1127.5 563.8 V613.8" stroke="#c4a000" stroke-width="1.2" fill="none"/>
<path d="M778 568.8 V611.3 M802 548 V629.5 M1042 550 V628.8 M1107 548 V629.5" stroke="#c4a000" stroke-width="2" fill="none"/>
<path d="M795.8 548 V628.8" stroke="#c4a000" stroke-width="4" fill="none"/>
<path d="M812 553.8 V623.8 M1082.8 548 V629.5" stroke="#c4a000" stroke-width="2.5" fill="none"/>
<path d="M1045.5 552.5 V628.8 M1047.5 551.3 V628.8 M1115 548 V628.8 M1120 548 V625 M1138.2 580 V596.3" stroke="#c4a000" stroke-width="1.3" fill="none"/>
<path d="M1050.5 550 V626.3 M1068.8 581.3 V588.8 M1086.2 548 V629.5 M1147.5 582.5 V592.5" stroke="#c4a000" stroke-width="1.5" fill="none"/>
<path d="M1092.5 548 V629.5" stroke="#c4a000" stroke-width="5.5" fill="none"/>
<path d="M1101 548 V629.5" stroke="#c4a000" stroke-width="6" fill="none"/>
<path d="M102 677.8 L305 677.8 L306 675.8 L310 667.8 L315 662.8 L320 657.3 L330 646.8 L339.5 637.6 L353 637.6 L427.5 649.5 L452.5 637.6 L545.5 637.6 L580 662.3 L615.5 637.6 L641.3 637.6 L666 665.8 L667.3 665.8 L667.8 657.8 L686 637.6 L701.3 637.6 L726.5 667.3 L727.5 669.8 L729 672.8 L730.5 677.8 L854.5 677.8 L855 667.8 L856 656.8 L858.3 648.8 L861.5 641.4 L866 637.6 L889.9 637.6 L906.4 671.1 L907.5 673.8 L908.5 677.8 L914.2 677.8 L914.7 667.8 L915.8 656.8 L918 649.1 L921.3 641.4 L924 637.6 L941.6 637.6 L959.2 672.2 L960.2 674.8 L961 677.8 L963.2 677.8 L963.6 667.8 L964.7 654.8 L966.9 645.8 L970.2 638.3 L971.9 637.6 L1012.6 637.6 L1013.8 643.8 L1027.5 667.8 L1029.7 672.3 L1031 677.8 L1390 677.8 L1390 679.8 L1031 679.8 L1029.7 685.3 L1027.5 689.8 L1013.8 713.8 L1012.6 720 L971.9 720 L970.2 719.3 L966.9 711.8 L964.7 702.8 L963.6 689.8 L963.2 679.8 L961 679.8 L960.2 682.8 L959.2 685.4 L941.6 720 L924 720 L921.3 716.2 L918 708.5 L915.8 700.8 L914.7 689.8 L914.2 679.8 L908.5 679.8 L907.5 683.8 L906.4 686.5 L889.9 720 L866 720 L861.5 716.2 L858.3 708.8 L856 700.8 L855 689.8 L854.5 679.8 L730.5 679.8 L729 684.8 L727.5 687.8 L726.5 690.3 L701.3 720 L686 720 L667.8 699.8 L667.3 691.8 L666 691.8 L641.3 720 L615.5 720 L580 695.8 L545.5 720 L452.5 720 L427.5 708.5 L353 720 L339.5 720 L330 710.8 L320 700.3 L315 694.8 L310 689.8 L306 681.8 L305 679.8 L102 679.8Z" fill="#87207a"/>
<path d="M306 677.3 V680.3 M307.3 674.7 V682.9 M308.7 671.8 V685.8 M310 669.3 V688.3 M311.7 667.6 V690 M662.1 662.9 V694.7 M663.8 664.7 V692.9 M665.1 666.3 V691.3 M668 659.1 V698.5 M669.6 657.3 V700.3 M671 655.8 V701.8 M724.7 666.7 V690.9 M726.3 668.6 V689 M727.7 671.7 V685.9 M906 671.8 V685.8 M907.8 676.6 V681 M958.5 672.3 V685.3 M960.1 676 V681.6 M1027.1 668.6 V689 M1028.4 671.2 V686.4 M1029.8 674.4 V683.2 M577 661.7 V696.4 M578.6 662.8 V695.3 M579.9 663.7 V694.4 M580 663.8 V694.3 M581.3 662.9 V695.2 M583.1 661.7 V696.4" stroke="#f5eef4" stroke-width=".7" opacity="0.67" fill="none"/>
<path d="M313 666.3 V691.3 M314.4 664.9 V692.7 M316.4 662.7 V694.9 M318.3 660.7 V696.9 M320.3 658.5 V699.1 M322.3 656.4 V701.2 M656.2 656.2 V701.4 M658.1 658.2 V699.4 M660.2 660.7 V696.9 M672.5 654.1 V703.5 M674.2 652.2 V705.4 M676 650.2 V707.4 M715.7 656.1 V701.5 M717.4 658.1 V699.5 M719.7 660.8 V696.8 M721.7 663.2 V694.4 M723.3 665 V692.6 M901.4 662.5 V695.1 M903.1 665.9 V691.7 M904.5 668.8 V688.8 M952.9 661.3 V696.3 M954.8 665.1 V692.5 M956.7 668.8 V688.8 M1023 661.3 V696.3 M1025.1 665.1 V692.5 M571.5 657.7 V700.3 M573.1 658.9 V699.1 M575.2 660.3 V697.7 M584.8 660.5 V697.6 M586.5 659.2 V698.8 M588.2 658.1 V699.9 M590.4 656.6 V701.4" stroke="#f5eef4" stroke-width=".7" opacity="0.50" fill="none"/>
<path d="M324.4 654.2 V703.4 M326.1 652.4 V705.2 M328.5 649.9 V707.7 M330.8 647.6 V710 M332.7 645.7 V711.9 M334.9 643.5 V714.1 M650 649 V708.6 M651.9 651.2 V706.4 M653.9 653.5 V704.1 M678.4 647.5 V710.1 M680.9 644.8 V712.8 M708.9 648 V709.6 M711.1 650.7 V706.9 M713.8 653.8 V703.8 M896.6 652.7 V704.9 M899.2 657.9 V699.7 M946.7 649.1 V708.5 M948.9 653.4 V704.2 M951.1 657.8 V699.8 M1017.7 652.1 V705.5 M1020.5 657 V700.6 M565.1 653.2 V704.7 M567.1 654.5 V703.4 M569.3 656.1 V701.8 M592.2 655.3 V702.6 M594.1 654 V703.9 M596.8 652.1 V705.7" stroke="#f5eef4" stroke-width=".7" opacity="0.33" fill="none"/>
<path d="M337.5 641 V716.6 M645 643.3 V714.3 M647.9 646.7 V710.9 M682.9 642.6 V715 M704 642.3 V715.3 M706.7 645.5 V712.1 M892 643.4 V714.2 M894.2 647.7 V709.9 M944 643.8 V713.8 M1015 647.4 V710.2 M560 649.5 V708.3 M562.4 651.2 V706.6 M598.9 650.6 V707.2" stroke="#f5eef4" stroke-width=".7" opacity="0.17" fill="none"/>
<path d="M347.1 649.7 V698.4 M354.9 657.8 V713.1 M357.4 657.6 V701.2 M364.8 645.8 V705.6 M369.9 657.8 V710.8 M380.3 662.9 V702.9 M382.6 663.1 V713.2 M389.9 650.1 V699.2 M400.1 666.4 V697.8 M410.2 651.7 V698.4 M420.2 665.3 V704 M428.7 669.4 V702.2 M438.6 646.6 V699.1 M448.6 648.9 V703.1 M452.5 656 V712.7 M460.2 658.6 V713.5 M466.7 645.1 V708.8 M476.7 642.2 V716.5 M484.6 644.9 V715.1 M495.5 650.9 V707.9 M500.5 656 V714 M509 641.2 V702.5 M516.5 646.8 V706.1 M523.7 642.3 V702.8 M532.4 649.5 V715.1 M540.5 645.9 V698 M544.8 650.5 V700.7 M550.4 660 V700.4 M560.8 652.5 V704.3 M564.7 673.2 V692.2 M572.4 672.3 V681.5 M580.4 672.8 V675.6 M590.7 660.5 V694.1 M601 650.2 V706.5 M611.4 651.2 V707.2 M618 653.7 V698.4 M628.1 649.1 V707.9 M638.4 647.1 V711.5 M688.5 644.7 V711.2 M691.2 655.6 V715.2 M694.5 653.1 V711.9 M698.6 656.7 V702.1 M869.8 646.6 V716.3 M877 656.7 V702.9 M883 651.7 V711.5 M888.1 646.9 V712.5 M929.2 655.6 V710 M933.3 643 V703.9 M935.8 646 V704.7 M982.2 641.4 V705.7 M988.8 654 V715.2 M995.7 648.1 V714.2 M1003.5 647.4 V712 M1006.8 652.4 V701.9" stroke="#f5eef4" stroke-width=".7" opacity=".22" fill="none"/>
<path d="M296 678.8 L298 678.2 L301 678 L302.5 679.3 L303.6 683.3 L304.6 680.8 L305.4 674.8 L306 678.8 M729.5 672.8 L730.3 681.8 L731.3 683.8 L732 675.8 L733.3 673.3 L734.6 682.8 L735.6 684.3 L737.2 680.8 L738.5 674.8 L740.5 673.8 L741.8 675.3 L742.5 678.8 M907 685.8 L908 681.8 L909.2 672.3 L910.3 675.8 L911.3 680.8 L912.6 683.1 L914 680.8 L914.6 678.8 M959.6 685.8 L960.5 679.8 L961.5 672.3 L962.5 676.8 L963.3 678.8 M1030.6 678.8 L1031.2 677.2 L1032.1 681.9 L1032.9 677.1 L1034.1 682.7 L1035.1 674.8 L1035.9 681.2 L1037 676.6 L1038.1 681.3 L1038.9 675.8 L1040.1 680.1 L1041.1 677.6 L1042.1 681.3 L1042.8 677.4 L1043.9 681.4 L1045.1 675.9 L1045.9 682.2 L1047 676 L1048.4 678.8" stroke="#87207a" stroke-width="1.3" fill="none" stroke-linejoin="round"/>
<path d="M724.5 678.8 V717.5 M734.5 678.8 V697.5 M737.5 648.8 V717.5 M763.8 656.3 V701.3 M828.2 672.5 V696.3 M832.5 666.3 V693.8 M1036.2 678.8 V712.5 M1043.2 678.8 V718.8 M1072 665.5 V678.8 M1231.8 680 V713" stroke="#87207a" stroke-width="1.4" fill="none"/>
<path d="M742.5 644.5 V718.8 M757 651.3 V705 M768.8 661.3 V680 M817.5 650 V707.5 M822 655 V696.3 M1045.5 639.5 V718.8 M1128.2 656.3 V703.8 M1132.2 662.5 V695 M1137.8 673.8 V688.8 M1141.5 674.5 V684.5 M1211.2 638.8 V715" stroke="#87207a" stroke-width="1.2" fill="none"/>
<path d="M754.5 648 V710 M777.5 658.8 V700 M841.2 678.8 V685.5 M1115.2 639.5 V718.8" stroke="#87207a" stroke-width="2" fill="none"/>
<path d="M780.8 653.8 V701.3 M787.5 647 V711.3 M795.8 638 V716.3 M838.8 670 V678.8 M844.2 673 V678.8 M1061.5 670 V696.3 M1068 671.3 V680 M1107.2 638.8 V718.8 M1122.8 645.5 V713.8" stroke="#87207a" stroke-width="1.3" fill="none"/>
<path d="M805.2 638 V718.8 M1151.2 676.3 V682.5" stroke="#87207a" stroke-width="1.5" fill="none"/>
<path d="M1049.5 640 V718.8 M1085.8 638.8 V718.8" stroke="#87207a" stroke-width="1.8" fill="none"/>
<path d="M1092 639.5 V719.5" stroke="#87207a" stroke-width="4" fill="none"/>
<path d="M1102 638 V719.5" stroke="#87207a" stroke-width="2.5" fill="none"/>
<path d="M516.2 764.5 V767.5 M518.2 763 V767.5 M520.2 761.5 V767.5 M522.2 760.2 V767.5 M524.2 759 V767.5 M526.2 758 V767.5 M528.2 756.8 V767.5 M530.2 755.5 V767.5 M532.2 754.5 V767.5 M534.2 753.2 V767.5 M536.2 752 V767.5" stroke="#224b89" stroke-width="1.4" fill="none"/>
<path d="M102 769.2 L291.2 769.2 L302.5 760 L312.5 754.5 L323.8 750.2 L333.8 750.2 L340 753.8 L345 761.2 L350 765.5 L355 767.5 L357.5 769.2 L400 769.2 L412.5 758.8 L427 752 L427.5 768.8 L430 767 L440 761.2 L450 758.8 L455 759.2 L460 763.8 L466.2 766.2 L475 767.5 L505 767.8 L515 767 L537 767 L545 767 L545.5 763 L546 768.8 L549.5 777.5 L580 777.5 L583.8 767.5 L584.2 766.2 L595 758.8 L605 755.5 L615.8 751.2 L618.8 760 L620 760 L625 764.5 L631.2 766.8 L640 767 L640.5 755 L640.8 778.8 L643.8 782 L667.5 782 L667.5 750.2 L686.2 750.2 L690 757.5 L695 763.8 L700 766.2 L700.5 762.5 L701.2 778.8 L703.8 782 L731.2 782 L736.2 777 L741.2 773.8 L742 781.2 L742.5 766.2 L748.8 766.2 L749.2 755 L749.5 778.8 L752.5 782 L776.2 782 L776.5 750.2 L795.8 750.2 L798.8 757.5 L803.8 763 L808.8 766.2 L810 762.5 L810.5 778.8 L813 782 L840 782 L845 777.5 L850 773.8 L851.2 781.2 L852 765.5 L854.2 765.5 L854.5 811.2 L866.2 811.2 L867.5 797.5 L870 785 L873.8 776.2 L877.5 771.2 L881.2 770 L885.5 770 L886 750.2 L891.2 748.2 L907.5 748.2 L911.2 755 L914.5 758.8 L915.5 811.2 L923.8 811.2 L925.5 795 L928.8 781.2 L932.5 773.8 L935 770.8 L941 770 L941.2 750 L943.8 748.2 L960 748.2 L962.5 752.5 L963.8 760 L964.5 811.2 L964.5 811.2 L971.8 811.2 L973 797.5 L974.5 789 L976 783.8 L978 779 L980 775.5 L984.2 771.5 L989.2 769.6 L995.5 769.6 L995.7 750.2 L1000.5 750.2 L1000.7 748.2 L1031.8 748.2 L1035.5 755 L1038 758.8 L1038 750.7 L1039.1 782.8 L1040.3 751.2 L1041.6 778.2 L1042.5 752 L1043.6 783.4 L1044.4 750.1 L1045.3 781.3 L1046.3 748.3 L1047.2 779.7 L1048.4 751.3 L1049.2 782.8 L1050 750.7 L1051 781 L1051.8 748.2 L1069.2 748.2 L1071.8 753.8 L1073 760 L1073.5 769 L1073.6 811.2 L1080.8 811.2 L1082.1 797.5 L1083.6 789 L1085.1 783.8 L1087.1 779 L1089.1 775.5 L1093.3 771.5 L1098.3 769.6 L1104.6 769.6 L1104.8 750.2 L1109.6 750.2 L1109.8 748.2 L1140.8 748.2 L1144.6 755 L1147.1 758.8 L1147.1 748.3 L1148.3 779.3 L1149.1 752.2 L1150.3 779.7 L1151.6 750.4 L1152.6 779.2 L1153.9 751 L1155.1 783.4 L1156 749.7 L1156.8 778.9 L1157.6 749.5 L1158.7 778 L1159.8 749.6 L1160.1 781 L1160.8 748.2 L1178.3 748.2 L1180.8 753.8 L1182.1 760 L1182.6 769 L1182.7 811.2 L1190 811.2 L1191.2 797.5 L1192.7 789 L1194.2 783.8 L1196.2 779 L1198.2 775.5 L1202.5 771.5 L1207.5 769.6 L1213.7 769.6 L1213.9 750.2 L1218.7 750.2 L1218.9 748.2 L1250 748.2 L1253.7 755 L1256.2 758.8 L1256.2 751.5 L1257.2 779.9 L1258.2 751.1 L1259 783.9 L1259.7 751.2 L1260.9 778.1 L1262 749.7 L1263.1 778.1 L1263.8 749 L1265.1 779.2 L1266.2 752 L1267.4 780.1 L1268.4 750.3 L1269.2 781 L1270 748.2 L1287.5 748.2 L1290 753.8 L1291.2 760 L1291.7 769 L1291.8 811.2 L1299 811.2 L1300.3 797.5 L1301.8 789 L1303.3 783.8 L1305.3 779 L1307.3 775.5 L1311.5 771.5 L1316.5 769.6 L1322.8 769.6 L1323 750.2 L1327.8 750.2 L1328 748.2 L1359 748.2 L1362.8 755 L1365.3 758.8 L1365.3 748.7 L1366.4 782.8 L1367.6 748.4 L1368.8 778.5 L1369.7 750.7 L1371 780 L1372.2 750.4 L1373.1 779.9 L1373.9 748.6 L1374.7 782.1 L1376 748.9 L1376.8 783.9 L1377.8 749.9 L1378.3 781 L1379 748.2 L1390 748.2" stroke="#224b89" stroke-width="1.3" fill="none" stroke-linejoin="round"/>
<path d="M695 763 H700.5 V767.5 H695 Z M741 772.5 H743 V782 H741 Z M742.5 765 H749 V768 H742.5 Z M804.5 762 H810 V767.5 H804.5 Z M849.5 772.5 H852.5 V782 H849.5 Z M877.5 770 H886.5 V781.2 H877.5 Z M884.5 750.2 H890 V771.2 H884.5 Z M934.5 770 H941.5 V781.2 H934.5 Z M990 770 H995.5 V781.2 H990 Z M983.5 770.5 H995.5 V773.5 H983.5 Z M995.5 750.2 H1000.5 V774.5 H995.5 Z M1000.5 748.2 H1013 V774.5 H1000.5 Z M1009 748.2 H1013.3 V772 H1009 Z M1099.1 770 H1104.6 V781.2 H1099.1 Z M1092.6 770.5 H1104.6 V773.5 H1092.6 Z M1104.6 750.2 H1109.6 V774.5 H1104.6 Z M1109.6 748.2 H1122.1 V774.5 H1109.6 Z M1118.1 748.2 H1122.4 V772 H1118.1 Z M1208.2 770 H1213.7 V781.2 H1208.2 Z M1201.7 770.5 H1213.7 V773.5 H1201.7 Z M1213.7 750.2 H1218.7 V774.5 H1213.7 Z M1218.7 748.2 H1231.2 V774.5 H1218.7 Z M1227.2 748.2 H1231.5 V772 H1227.2 Z M1317.3 770 H1322.8 V781.2 H1317.3 Z M1310.8 770.5 H1322.8 V773.5 H1310.8 Z M1322.8 750.2 H1327.8 V774.5 H1322.8 Z M1327.8 748.2 H1340.3 V774.5 H1327.8 Z M1336.3 748.2 H1340.6 V772 H1336.3 Z" fill="#224b89"/>
<path d="M102 184.5 H1390" stroke="#585858" stroke-width="1" stroke-dasharray="4 2" fill="none"/>
<path d="M102 229.5 H1390" stroke="#585858" stroke-width="1" stroke-dasharray="4 2" fill="none"/>
<path d="M102 274.5 H1390" stroke="#585858" stroke-width="1" stroke-dasharray="4 2" fill="none"/>
<path d="M102 364.5 H1390" stroke="#585858" stroke-width="1" stroke-dasharray="4 2" fill="none"/>
<path d="M102 454.5 H1390" stroke="#585858" stroke-width="1" stroke-dasharray="4 2" fill="none"/>
<path d="M102 544.5 H1390" stroke="#585858" stroke-width="1" stroke-dasharray="4 2" fill="none"/>
<path d="M102 634.5 H1390" stroke="#585858" stroke-width="1" stroke-dasharray="4 2" fill="none"/>
<path d="M102 724.5 H1390" stroke="#585858" stroke-width="1" stroke-dasharray="4 2" fill="none"/>
<path d="M102 814.5 H1390" stroke="#585858" stroke-width="1" stroke-dasharray="4 2" fill="none"/>
<path d="M50.5 176.5 H92.5 L100.5 184.5 L92.5 192.5 H50.5 Z" fill="#224b89" stroke="#163561" stroke-width="1"/>
<path d="M51.5 177.5 H92 L99 184.5 L92 191.5 H51.5 Z" fill="none" stroke="#3a62a0" stroke-width="1"/>
<path d="M50.5 221.5 H92.5 L100.5 229.5 L92.5 237.5 H50.5 Z" fill="#4e9a06" stroke="#356b04" stroke-width="1"/>
<path d="M51.5 222.5 H92 L99 229.5 L92 236.5 H51.5 Z" fill="none" stroke="#72cc10" stroke-width="1"/>
<path d="M67.5 266.5 H92.5 L100.5 274.5 L92.5 282.5 H67.5 Z" fill="#c4a000" stroke="#8a7000" stroke-width="1"/>
<path d="M68.5 267.5 H92 L99 274.5 L92 281.5 H68.5 Z" fill="none" stroke="#f0cc20" stroke-width="1"/>
<path d="M73.5 311.5 H92.5 L100.5 319.5 L92.5 327.5 H73.5 Z" fill="#87207a" stroke="#5f1656" stroke-width="1"/>
<path d="M74.5 312.5 H92 L99 319.5 L92 326.5 H74.5 Z" fill="none" stroke="#c030ae" stroke-width="1"/>
<path d="M73.5 401.5 H92.5 L100.5 409.5 L92.5 417.5 H73.5 Z" fill="#224b89" stroke="#163561" stroke-width="1"/>
<path d="M74.5 402.5 H92 L99 409.5 L92 416.5 H74.5 Z" fill="none" stroke="#3a62a0" stroke-width="1"/>
<path d="M47.5 491.5 H92.5 L100.5 499.5 L92.5 507.5 H47.5 Z" fill="#4e9a06" stroke="#356b04" stroke-width="1"/>
<path d="M48.5 492.5 H92 L99 499.5 L92 506.5 H48.5 Z" fill="none" stroke="#72cc10" stroke-width="1"/>
<path d="M47.5 581.5 H92.5 L100.5 589.5 L92.5 597.5 H47.5 Z" fill="#c4a000" stroke="#8a7000" stroke-width="1"/>
<path d="M48.5 582.5 H92 L99 589.5 L92 596.5 H48.5 Z" fill="none" stroke="#f0cc20" stroke-width="1"/>
<path d="M47.5 671.5 H92.5 L100.5 679.5 L92.5 687.5 H47.5 Z" fill="#87207a" stroke="#5f1656" stroke-width="1"/>
<path d="M48.5 672.5 H92 L99 679.5 L92 686.5 H48.5 Z" fill="none" stroke="#c030ae" stroke-width="1"/>
<path d="M55.5 761.5 H92.5 L100.5 769.5 L92.5 777.5 H55.5 Z" fill="#224b89" stroke="#163561" stroke-width="1"/>
<path d="M56.5 762.5 H92 L99 769.5 L92 776.5 H56.5 Z" fill="none" stroke="#3a62a0" stroke-width="1"/>
<defs>
<linearGradient id="gbtn" x1="0" y1="0" x2="0" y2="1"><stop offset="0" stop-color="#ffffff"/><stop offset="1" stop-color="#dcdad6"/></linearGradient>
<linearGradient id="gwin" x1="0" y1="0" x2="0" y2="1"><stop offset="0" stop-color="#ffffff"/><stop offset="1" stop-color="#d4d7de"/></linearGradient>
<linearGradient id="gfold" x1="0" y1="0" x2="0" y2="1"><stop offset="0" stop-color="#7ba7e0"/><stop offset="1" stop-color="#4478c0"/></linearGradient>
<radialGradient id="gsph" cx="0.4" cy="0.35" r="0.7"><stop offset="0" stop-color="#c8c8c6"/><stop offset="0.6" stop-color="#9a9a98"/><stop offset="1" stop-color="#7e7e7c"/></radialGradient>
<linearGradient id="garr" x1="0" y1="0" x2="0" y2="1"><stop offset="0" stop-color="#6aa0d8"/><stop offset="1" stop-color="#3a76b8"/></linearGradient>
</defs>
<rect x="6.5" y="35.5" width="13" height="13" fill="#ebe9e5" stroke="#c6c4bf" stroke-width="1"/>
<circle cx="18.3" cy="37" r="2.2" fill="#f3ef8a"/>
<circle cx="52.9" cy="42" r="5.8" fill="url(#gsph)" stroke="#8a8a88" stroke-width="0.6"/>
<g stroke-linecap="round" fill="none"><path d="M140.5 36.5 L150.5 48" stroke="#c9c9c7" stroke-width="2.6"/><path d="M139.6 37.8 a2.6 2.6 0 1 0 3.2 -2.6" stroke="#b9b9b7" stroke-width="1.4"/><path d="M151 36 L144.5 43.5" stroke="#9fa6ae" stroke-width="1.6"/><path d="M144.5 43.5 L139.8 48.6" stroke="#3d7cc4" stroke-width="3.4"/></g>
<path d="M277 37 L287 47.3 M286.6 36.6 L276 47.6" stroke="#111" stroke-width="2.1" stroke-linecap="round" fill="none"/>
<rect x="1325" y="11" width="7" height="2" fill="#8c8c8c"/>
<path d="M1356 9 H1362 V15 Z" fill="#8c8c8c"/><path d="M1356 10.5 V15 H1360.5 Z" fill="#a8a8a8"/>
<circle cx="1389" cy="11.8" r="7" fill="#8bb158"/>
<path d="M1386 8.8 L1392 14.8 M1392 8.8 L1386 14.8" stroke="#fff" stroke-width="1.7" stroke-linecap="round"/>
<rect x="1377.5" y="62.5" width="10" height="10" rx="2" fill="#fbf9f6" stroke="#555" stroke-width="1"/>
<rect x="1381.5" y="64.5" width="4" height="4" rx="1" fill="none" stroke="#555" stroke-width="1"/><rect x="1379.5" y="66.5" width="4" height="4" rx="1" fill="#fbf9f6" stroke="#555" stroke-width="1"/>
<rect x="1391.5" y="62.5" width="10" height="10" rx="2" fill="#fbf9f6" stroke="#555" stroke-width="1"/>
<path d="M1394 65 L1399 70 M1399 65 L1394 70" stroke="#444" stroke-width="1.9" stroke-linecap="round"/>
<rect x="5.6" y="88.1" width="1.5" height="1.5" fill="#cbc9c4"/><rect x="5.6" y="91.8" width="1.5" height="1.5" fill="#cbc9c4"/><rect x="5.6" y="95.6" width="1.5" height="1.5" fill="#cbc9c4"/><rect x="5.6" y="99.3" width="1.5" height="1.5" fill="#cbc9c4"/><rect x="5.6" y="103.1" width="1.5" height="1.5" fill="#cbc9c4"/><rect x="9" y="89.9" width="1.5" height="1.5" fill="#cbc9c4"/><rect x="9" y="93.7" width="1.5" height="1.5" fill="#cbc9c4"/><rect x="9" y="97.4" width="1.5" height="1.5" fill="#cbc9c4"/><rect x="9" y="101.2" width="1.5" height="1.5" fill="#cbc9c4"/>
<rect x="22" y="88" width="16" height="16" rx="1" fill="url(#gwin)" stroke="#a9a9a9" stroke-width="1"/>
<rect x="23.5" y="88.8" width="11" height="2" fill="#204a87"/>
<circle cx="36.8" cy="89.6" r="3.4" fill="#f4e61a"/><circle cx="36.8" cy="89.6" r="1.3" fill="#fffde0"/>
<path d="M47.3 94.2 H56.1 L51.7 99.1 Z" fill="#3a3a3a"/>
<path d="M72.5 88.5 H80 V104 H72.5 Z" fill="#6e6e6e" stroke="#4f4f4f" stroke-width="1"/>
<path d="M79.5 85.5 H87 L90.5 89 V98 H79.5 Z" fill="#f4f4f4" stroke="#666" stroke-width="1"/>
<path d="M81.5 88.5 H86 M81.5 90.5 H85" stroke="#aaa" stroke-width="0.8"/>
<path d="M74 93 H91.7 L91.2 104.5 H73 Z" fill="url(#gfold)" stroke="#2f5fa6" stroke-width="1"/>
<path d="M98.9 94.2 H107.7 L103.3 99.1 Z" fill="#3a3a3a"/>
<path d="M119.5 92 H134.5 L137.5 100 V106 H116.5 V100 Z" fill="#ecebe8" stroke="#5e5e5e" stroke-width="1.2" stroke-linejoin="round"/>
<path d="M116.5 100 H137.5" stroke="#5e5e5e" stroke-width="1"/>
<rect x="120" y="101.3" width="10" height="2.4" fill="#9a9a9a"/><rect x="131.2" y="100.8" width="3.2" height="3.8" fill="#fff" stroke="#222" stroke-width="0.8"/>
<path d="M118.5 90.5 C119.5 85.5 128.5 84.5 129.8 91.5 H133 L127.2 98.8 L121.2 91.5 H124.6 C124.2 88.5 121 88.3 118.5 90.5 Z" fill="url(#garr)" stroke="#2e66a8" stroke-width="0.8" stroke-linejoin="round"/>
<path d="M143.8 94.2 H152.7 L148.2 99.1 Z" fill="#3a3a3a"/>
<rect x="170.7" y="88.2" width="16.6" height="16.2" rx="3" fill="url(#gbtn)" stroke="#8e8c88" stroke-width="1"/><path d="M177.5 91.5 H180.5 V94.8 H183.8 V97.8 H180.5 V101.1 H177.5 V97.8 H174.2 V94.8 H177.5 Z" fill="#fff" stroke="#7d7d7b" stroke-width="1" stroke-linejoin="round"/>
<rect x="203.7" y="88.2" width="16.6" height="16.2" rx="3" fill="url(#gbtn)" stroke="#8e8c88" stroke-width="1"/><rect x="207.2" y="94.8" width="9.6" height="3" fill="#fff" stroke="#7d7d7b" stroke-width="1"/>
<rect x="236.8" y="88.2" width="16.6" height="16.2" rx="3" fill="url(#gbtn)" stroke="#8e8c88" stroke-width="1"/><path d="M240.5 94.5 V91.8 H243.5 M246.7 91.8 H249.7 V94.5 M249.7 98 V100.8 H246.7 M243.5 100.8 H240.5 V98" fill="none" stroke="#7d7d7b" stroke-width="1.5"/><circle cx="245.1" cy="96.3" r="1.8" fill="#dddbd7"/>
<path d="M274 87.7 H281.7 V104.8 H280.3 V93 H276 L274 91.5 Z" fill="#2355a0"/>
<path d="M296.2 87.7 H288 V104.8 H289.4 V93 H294.2 L296.2 91.5 Z" fill="#2355a0"/>
<path d="M442.0 93.0 H451.2 L446.6 98.0 Z" fill="#3a3a3a"/>
<ellipse cx="470.5" cy="105" rx="8" ry="1.3" fill="#cfcdc9"/>
<path d="M461 104 L469.5 94.5" stroke="#c80000" stroke-width="1.6" stroke-linecap="round"/>
<path d="M469 96.6 L467.8 93.2 L475.6 85 L480 88.6 L472.4 97.4 Z" fill="#cc0000"/>
<path d="M500.8 96.5 H523" stroke="#7d8a3a" stroke-width="1"/>
<path d="M503.2 96.5 L505 91.5 H507.8 L509.6 96.5 L507.8 101.7 H505 Z" fill="#f2d600" stroke="#c4a000" stroke-width="0.8"/>
<path d="M509.4 96.5 L511.6 91.5 H518.2 L520.4 96.5 L518.2 101.7 H511.6 Z" fill="#66cc22" stroke="#4e9a06" stroke-width="0.8"/>
<path d="M1393.5 153.5 L1397.5 149 L1401.5 153.5 Z" fill="#666"/>
<path d="M1393 808.8 H1402 L1397.5 813.8 Z" fill="#333"/>
<path d="M1255.1 243.1 L1261.5 245.9 L1269.4 248.7 L1282.1 252.7 L1296.4 256.7 L1310.7 259.8 L1320.3 263.3 L1329.8 267.8 L1339.3 273.3 L1345.7 279.7 L1350.5 288.4 L1354.4 298 L1356.8 307.5 L1358.4 318.6 L1361.6 329.7 L1365.5 340.9 L1368.7 352 L1371.9 366 L1372.4 369.5 L1374 380.7 L1375.1 391.8 L1375.6 404.5 L1375.2 417.2 L1374.3 427.5 L1371.1 429.1 L1367.6 431.5 L1366.3 437.9 L1363.2 445.8 L1356.8 452.9 L1348.9 459.3 L1339.3 464.9 L1329.8 468 L1313.9 469.6 L1307.6 471.2 L1291.7 475.2 L1282.1 480 L1269.4 481.5 L1153.9 481.5 L1144.4 479.2 L1128.5 476.8 L1112.6 473.6 L1096.7 468 L1082.4 461.7 L1071.3 455.3 L1061.8 446.6 L1053.8 436.3 L1048.3 426.7 L1045.1 417.2 L1042.7 407.7 L1042.4 391.8 L1042.4 366 L1042.7 350.4 L1043.5 339.3 L1045.1 329.7 L1047.5 320.2 L1050.7 310.7 L1053.8 302.7 L1057.8 294.8 L1063.4 286.8 L1069.7 279.7 L1076.1 274.1 L1084 269.4 L1093.6 265.4 L1103.1 261.4 L1115.8 255.9 L1128.5 251.1 L1141.2 247.9 L1150.8 245.2 L1160.3 243.1Z" stroke="#f20f12" stroke-width="4.4" fill="none" stroke-linejoin="round" stroke-linecap="round"/><path d="M1365.5 414 L1369.5 418.8 L1373 427.5" stroke="#f20f12" stroke-width="4.4" fill="none" stroke-linejoin="round" stroke-linecap="round"/>
</svg>
<div class="lbl" style="left:50px;top:177px;width:43px;text-align:center;">count</div>
<div class="lbl" style="left:50px;top:222px;width:43px;text-align:center;">angle</div>
<div class="lbl" style="left:67px;top:267px;width:26px;text-align:center;">frq</div>
<div class="lbl" style="left:73px;top:312px;width:20px;text-align:center;">i1</div>
<div class="lbl" style="left:73px;top:402px;width:20px;text-align:center;">i2</div>
<div class="lbl" style="left:47px;top:492px;width:46px;text-align:center;">pwm1</div>
<div class="lbl" style="left:47px;top:582px;width:46px;text-align:center;">pwm2</div>
<div class="lbl" style="left:47px;top:672px;width:46px;text-align:center;">pwm3</div>
<div class="lbl" style="left:55px;top:762px;width:38px;text-align:center;">iqref</div>
</body></html>
